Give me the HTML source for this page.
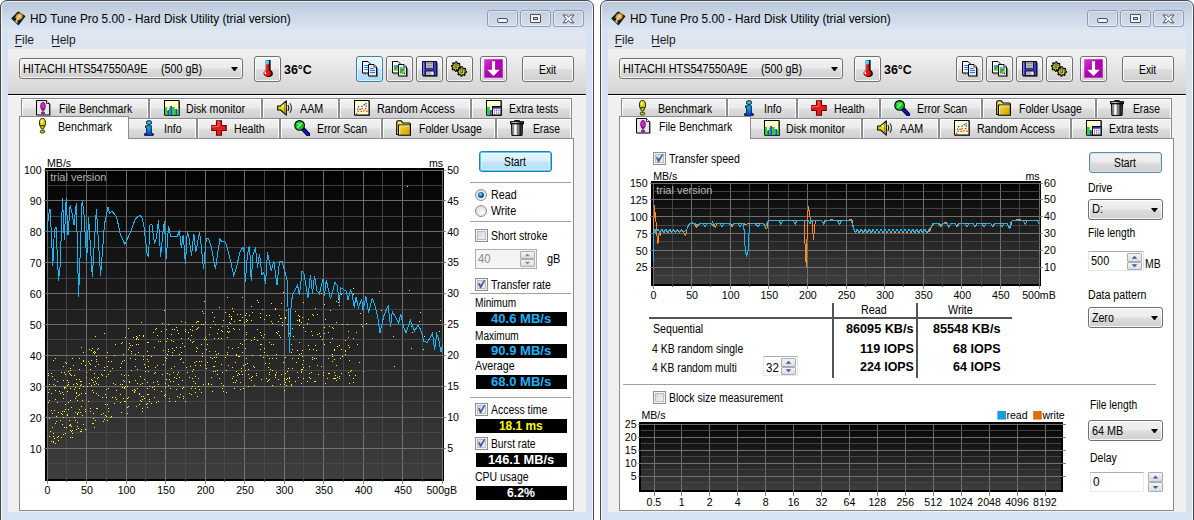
<!DOCTYPE html>
<html lang="en"><head><meta charset="utf-8"><title>HD Tune Pro 5.00 - Hard Disk Utility (trial version)</title>
<style>
html,body{margin:0;padding:0}
body{width:1194px;height:520px;overflow:hidden;background:#fff;position:relative;font-family:"Liberation Sans", Arial, sans-serif;font-size:12px;line-height:16px;color:#000}
div,span,svg{position:absolute;box-sizing:border-box}
.t{white-space:pre;transform-origin:0 0}
.win{top:0;width:594px;height:540px;border:1px solid #484848;border-radius:7px 7px 0 0;background:linear-gradient(#b7c7d9 0,#c9d7e6 14px,#dbe6f3 30px,#d6e3f2 31px);box-shadow:inset 0 0 0 1px rgba(255,255,255,.75)}
.btn{border:1px solid #707070;border-radius:3px;background:linear-gradient(#f2f2f2 0,#ebebeb 48%,#dddddd 52%,#cfcfcf 100%);box-shadow:inset 0 0 0 1px rgba(255,255,255,.85)}
.btn.hot{border-color:#3c7fb1;background:linear-gradient(#eaf6fd 0,#d9f0fc 48%,#bee6fd 52%,#a7d9f5 100%);box-shadow:inset 0 0 0 1px rgba(255,255,255,.6)}
.btn.def{border-color:#6d8799;background:linear-gradient(#f2f2f2 0,#ebebeb 48%,#dddddd 52%,#cfcfcf 100%);box-shadow:inset 0 0 0 1px #bfe8f6}
.btn.hotdef{border-color:#3479ad;background:linear-gradient(#e8f5fd 0,#d9effb 48%,#c2e5f8 52%,#b4def6 100%);box-shadow:inset 0 0 0 1px #46d2f8,inset 0 0 0 2px rgba(255,255,255,.45)}
.tab{height:20px;border:1px solid #898c95;border-bottom:none;background:linear-gradient(#f2f2f2 0,#ebebeb 48%,#dddddd 52%,#d0d0d0 100%);box-shadow:inset 1px 1px 0 rgba(255,255,255,.85),inset -1px 0 0 rgba(255,255,255,.85)}
.tab.sel{height:23px;background:#fff;z-index:3;box-shadow:none}
.page{background:#fff;border:1px solid #898c95}
.sep{height:1px;background:#a0a0a0}
.cb{width:13px;height:13px;border:1px solid #8e8f8f;background:linear-gradient(135deg,#ccd0d6,#f8f8f9);box-shadow:inset 0 0 0 1px #f4f4f4,inset 0 0 0 2px #b9bdc4}
.cb.on{}
.rb{width:12px;height:12px;border:1px solid #8e8f8f;border-radius:50%;background:radial-gradient(circle at 60% 60%,#fdfdfd,#cfd3d9)}
.vb{background:#000;width:92px;height:14px}
.arrow{width:0;height:0;border-left:3.5px solid transparent;border-right:3.5px solid transparent;border-top:4px solid #000}
.edit{background:#fff;border:1px solid #e3e9ef;border-top-color:#abadb3}
.spbtn{border:1px solid #a9adb5;background:linear-gradient(#f4f4f4,#dcdcdc);border-radius:1px}
</style></head>
<body>
<div class="win" style="left:0px"><div style="left:-1px;top:-1px;width:594px;height:540px"><svg style="left:10.5px;top:10.8px" width="15" height="15" viewBox="0 0 15.4 15.4" ><path d="M.6 7.6 L7.2 .8 L14.4 5.4 L7.6 14.4Z" fill="#1a1a1a" stroke="#000" stroke-width=".8"/><path d="M1 8.2 L7.6 14.8 L7.6 13" fill="#555"/><ellipse cx="8.4" cy="5.8" rx="3.9" ry="3.3" transform="rotate(-35 8.4 5.8)" fill="#f0a838" stroke="#7a4a08" stroke-width=".7"/><ellipse cx="8.4" cy="5.4" rx="1.2" ry="1" fill="#fde8b0"/><path d="M7 6.6 L5.6 11" stroke="#d8d8d8" stroke-width="1.5"/><path d="M4.4 10 L6.6 12" stroke="#bbb" stroke-width="1.4"/></svg><span class="t" style="left:29.80px;top:10.60px;transform:scaleX(0.9847);">HD Tune Pro 5.00 - Hard Disk Utility (trial version)</span><div style="left:487px;top:10px;width:31px;height:17px;border:1px solid #8d9db7;border-radius:3px;background:linear-gradient(#c3d0e0,#d3deeb);box-shadow:inset 0 0 0 1px rgba(255,255,255,.45)"></div><div style="left:520px;top:10px;width:31px;height:17px;border:1px solid #8d9db7;border-radius:3px;background:linear-gradient(#c3d0e0,#d3deeb);box-shadow:inset 0 0 0 1px rgba(255,255,255,.45)"></div><div style="left:553px;top:10px;width:31px;height:17px;border:1px solid #8d9db7;border-radius:3px;background:linear-gradient(#c3d0e0,#d3deeb);box-shadow:inset 0 0 0 1px rgba(255,255,255,.45)"></div><div style="left:497px;top:18px;width:11px;height:5px;border:1px solid #4a4f5c;border-radius:2px;background:#f4f4f4"></div><div style="left:530px;top:14px;width:11px;height:9px;border:1px solid #4a4f5c;border-radius:1px;background:#f4f4f4"></div><div style="left:533px;top:17px;width:5px;height:3px;border:1px solid #4a4f5c;background:#c9d5e4"></div><svg style="left:562px;top:14px" width="13" height="10" viewBox="0 0 13 10" ><path d="M1 1 L4.4 1 L6.5 3.1 L8.6 1 L12 1 L8.7 4.9 L12 8.8 L8.6 8.8 L6.5 6.6 L4.4 8.8 L1 8.8 L4.3 4.9Z" fill="#f6f6f6" stroke="#4a4f5c" stroke-width="1" stroke-linejoin="round"/></svg><div style="left:8px;top:30px;width:578px;height:482px;background:#f0f0f0"></div><div style="left:8px;top:30px;width:578px;height:19px;background:linear-gradient(#e1e7f0,#dde4ee)"></div><span class="t" style="left:14.70px;top:31.70px;color:#1c1c2c;">File</span><div style="left:15px;top:46px;width:7px;height:1px;background:#1c1c2c"></div><span class="t" style="left:51.00px;top:31.70px;color:#1c1c2c;">Help</span><div style="left:51.5px;top:46px;width:8.5px;height:1px;background:#1c1c2c"></div><div style="left:8px;top:49px;width:578px;height:45px;background:linear-gradient(#f1f1f1,#e6e6e6 45%,#d4d4d4)"></div><div style="left:8px;top:94px;width:578px;height:1px;background:#000"></div><div style="left:8px;top:95px;width:578px;height:1px;background:#fff"></div><div class="btn" style="left:19px;top:58px;width:224px;height:21px;"></div><span class="t" style="left:22.60px;top:61.00px;transform:scaleX(0.9069);">HITACHI HTS547550A9E</span><span class="t" style="left:161.40px;top:61.00px;transform:scaleX(0.8950);">(500 gB)</span><div class="arrow" style="left:231px;top:67px;width:7px;height:4px;"></div><div class="btn" style="left:254px;top:56px;width:27px;height:26px;"></div><svg style="left:263px;top:59.6px" width="10.5" height="17.5" viewBox="0 0 10.5 17.5" shape-rendering="geometricPrecision"><path d="M4 0 H7.6 V10.1 Q9.9 11.3 9.9 13.6 Q9.9 17 5.8 17 Q2.4 17 1.8 14.6 L4 10.4Z" fill="#000"/><path d="M2.6 .4 H6.1 V10 Q8.3 11.2 8.3 13.3 Q8.3 16.3 4.4 16.3 Q.6 16.3 .6 13.3 Q.6 11.2 2.6 10Z" fill="#f01010" stroke="#000" stroke-width=".35"/><rect x="2.6" y=".4" width="3.5" height="3.8" fill="#38d8e8"/><path d="M2.3 11.8 Q1.7 13.4 3 14.2" stroke="#fff" stroke-width="1.3" fill="none"/><path d="M.8 13.3 Q.8 11.4 2.8 10.2 V.6" fill="none" stroke="#a0e8f4" stroke-width=".7"/></svg><span class="t" style="left:284.00px;top:61.90px;font-weight:bold;transform:scaleX(1.0368);">36°C</span><div class="btn hot" style="left:356px;top:56px;width:27px;height:26px;"></div><svg style="left:362px;top:61px" width="16" height="16" viewBox="0 0 16 16" shape-rendering="geometricPrecision"><path d="M.5 .5 H6 L8.5 3 V12 H.5Z" fill="#f4f4f4" stroke="#000"/><path d="M1 12.8 H9.3 V4" fill="none" stroke="#555"/><path d="M2.3 4.5 H6 M2.3 6.5 H6 M2.3 8.5 H6" stroke="#1878ff" stroke-width="1"/><path d="M6.5 3.5 H12 L14.5 6 V15 H6.5Z" fill="#e8e8e8" stroke="#000"/><path d="M7 15.8 H15.3 V7" fill="none" stroke="#555"/><path d="M12 3.5 V6 H14.5" fill="#fff" stroke="#000" stroke-width=".8"/><path d="M8 7.5 H12 M8 9.5 H13 M8 11.5 H13" stroke="#1878ff" stroke-width="1.1"/></svg><div class="btn" style="left:386px;top:56px;width:27px;height:26px;"></div><svg style="left:392px;top:61px" width="16" height="16" viewBox="0 0 16 16" shape-rendering="geometricPrecision"><path d="M.5 .5 H6 L8.5 3 V12 H.5Z" fill="#f4f4f4" stroke="#000"/><path d="M1 12.8 H9.3 V4" fill="none" stroke="#555"/><rect x="2" y="4" width="4.5" height="5.5" fill="#20c020"/><rect x="2" y="4" width="4.5" height="1.6" fill="#30b0f0"/><rect x="3.5" y="6" width="1.8" height="1.8" fill="#f03020"/><rect x="4.4" y="7" width="1.2" height="1.4" fill="#f0e020"/><path d="M6.5 3.5 H12 L14.5 6 V15 H6.5Z" fill="#e8e8e8" stroke="#000"/><path d="M7 15.8 H15.3 V7" fill="none" stroke="#555"/><path d="M12 3.5 V6 H14.5" fill="#fff" stroke="#000" stroke-width=".8"/><rect x="8" y="6.5" width="4.6" height="6" fill="#20c020"/><rect x="8" y="6.5" width="4.6" height="1.6" fill="#30b0f0"/><rect x="9.6" y="8.6" width="1.8" height="1.8" fill="#f03020"/><rect x="10.4" y="9.8" width="1.3" height="1.5" fill="#f0e020"/><rect x="12" y="12" width="1" height="1" fill="#000"/></svg><div class="btn" style="left:416px;top:56px;width:27px;height:26px;"></div><svg style="left:422px;top:61px" width="16" height="16" viewBox="0 0 16 16" shape-rendering="geometricPrecision"><path d="M1 14.8 L.5 14 V.5 H14.5 V14.8Z" fill="#3a3af0" stroke="#000"/><path d="M1.3 15.5 H15.3 V1.5" fill="none" stroke="#555" stroke-width="1"/><rect x="3.5" y=".8" width="8" height="7" fill="#c8c8c8" stroke="#000" stroke-width=".8"/><path d="M4.5 2.6 H10.5 M4.5 4.4 H10.5 M4.5 6.2 H10.5" stroke="#888" stroke-width=".9"/><rect x="3.5" y="10" width="8.5" height="4.6" fill="#b8b8b8" stroke="#000" stroke-width=".8"/><rect x="9.5" y="10.8" width="1.8" height="3" fill="#fff"/><path d="M1.4 1 V14" stroke="#8080ff" stroke-width="1"/></svg><div class="btn" style="left:446px;top:56px;width:27px;height:26px;"></div><svg style="left:451px;top:60.5px" width="16" height="16" viewBox="0 0 16 16" shape-rendering="geometricPrecision"><polygon points="9.70,5.60 9.61,6.52 8.05,6.86 7.74,7.43 8.32,8.92 7.61,9.51 6.26,8.65 5.64,8.84 5.00,10.30 4.08,10.21 3.74,8.65 3.17,8.34 1.68,8.92 1.09,8.21 1.95,6.86 1.76,6.24 0.30,5.60 0.39,4.68 1.95,4.34 2.26,3.77 1.68,2.28 2.39,1.69 3.74,2.55 4.36,2.36 5.00,0.90 5.92,0.99 6.26,2.55 6.83,2.86 8.32,2.28 8.91,2.99 8.05,4.34 8.24,4.96" fill="#e4e400" stroke="#000" stroke-width="1.1" stroke-linejoin="round"/><polygon points="15.50,10.60 15.41,11.52 13.85,11.86 13.54,12.43 14.12,13.92 13.41,14.51 12.06,13.65 11.44,13.84 10.80,15.30 9.88,15.21 9.54,13.65 8.97,13.34 7.48,13.92 6.89,13.21 7.75,11.86 7.56,11.24 6.10,10.60 6.19,9.68 7.75,9.34 8.06,8.77 7.48,7.28 8.19,6.69 9.54,7.55 10.16,7.36 10.80,5.90 11.72,5.99 12.06,7.55 12.63,7.86 14.12,7.28 14.71,7.99 13.85,9.34 14.04,9.96" fill="#e4e400" stroke="#000" stroke-width="1.1" stroke-linejoin="round"/><path d="M4.1 7 V2.2 L5 .4 L5.9 2.2 V7Z" fill="#c0c0c0" stroke="#222" stroke-width=".7"/><path d="M9.9 12 V7.2 L10.8 5.4 L11.7 7.2 V12Z" fill="#c0c0c0" stroke="#222" stroke-width=".7"/></svg><div class="btn" style="left:480px;top:56px;width:27px;height:26px;"></div><div style="left:484px;top:59px;width:19px;height:19px;background:linear-gradient(135deg,#d040d0,#b000b0 45%,#a000a0);border-radius:1px;box-shadow:inset 0 0 0 1px rgba(255,160,255,.35)"></div><svg style="left:484px;top:59px" width="19" height="19" viewBox="0 0 19 19" ><path d="M7.9 2.3 H11.1 V10.7 H15.8 L9.5 17 L3.2 10.7 H7.9Z" fill="#fff"/></svg><div class="btn" style="left:522px;top:56px;width:52px;height:26px;"></div><span class="t" style="left:538.90px;top:61.50px;transform:scaleX(0.8593);">Exit</span><div class="page" style="left:19px;top:138px;width:555px;height:373px;"></div><div class="tab" style="left:21px;top:98px;width:128px;height:20px;"></div><svg style="left:36px;top:100px" width="16" height="16" viewBox="0 0 16 16" shape-rendering="geometricPrecision"><path d="M.5 .5 H10.5 L13.5 3.5 V15 H.5Z" fill="#e6e6e6" stroke="#000"/><path d="M1 15.7 H14.2 V4" fill="none" stroke="#777" stroke-width="1"/><path d="M10.5 .5 V3.5 H13.5" fill="#fff" stroke="#000" stroke-width=".8"/><ellipse cx="7" cy="6.2" rx="2.3" ry="3.8" fill="#e020e0" stroke="#400040" stroke-width=".8"/><path d="M5.8 9 L8.2 9 L7.6 11 L6.4 11Z" fill="#e020e0" stroke="#400040" stroke-width=".6"/><rect x="5.4" y="12" width="3.2" height="2" rx=".9" fill="#e020e0" stroke="#400040" stroke-width=".7"/></svg><span class="t" style="left:58.70px;top:100.50px;transform:scaleX(0.8780);">File Benchmark</span><div class="tab" style="left:149px;top:98px;width:113px;height:20px;"></div><svg style="left:164px;top:100px" width="16" height="16" viewBox="0 0 16 16" shape-rendering="geometricPrecision"><rect x="1" y="1" width="15" height="15" fill="#555"/><rect x=".5" y=".5" width="14.5" height="14.5" fill="#ffffc8" stroke="#000"/><path d="M1 15 V7 H3 V15Z M5 15 V7.5 H6.2 V15Z M8 15 V7 H10.6 V15Z M13 15 V10 H14.5 V15Z M3 15 V11 H5 V15Z M10.6 15 V9 H11.4 V15Z" fill="#18e018"/><path d="M3.6 15 V10 H5 V15Z M6.2 15 V6 H8 V15Z M11.4 15 V9 H13 V15Z" fill="#3838f0"/></svg><span class="t" style="left:186.40px;top:100.50px;transform:scaleX(0.8847);">Disk monitor</span><div class="tab" style="left:262px;top:98px;width:77px;height:20px;"></div><svg style="left:277px;top:100px" width="16" height="16" viewBox="0 0 16 16" shape-rendering="geometricPrecision"><path d="M.7 6 H3.6 L9.3 .8 V15.2 L3.6 10 H.7Z" fill="#e8e000" stroke="#000" stroke-width="1.1" stroke-linejoin="round"/><path d="M3.8 6.2 L8.4 2.4 V8" fill="#ffff90"/><path d="M7.4 3 V13" stroke="#806000" stroke-width=".8"/><path d="M11 5 Q12.6 8 11 11" fill="none" stroke="#111" stroke-width="1.1"/><path d="M13 3.2 Q15.8 8 13 12.8" fill="none" stroke="#333" stroke-width="1.1"/></svg><span class="t" style="left:299.80px;top:100.50px;transform:scaleX(0.8918);">AAM</span><div class="tab" style="left:339px;top:98px;width:132px;height:20px;"></div><svg style="left:354px;top:100px" width="16" height="16" viewBox="0 0 16 16" shape-rendering="geometricPrecision"><rect x="1" y="1" width="15" height="15" fill="#555"/><rect x=".5" y=".5" width="14.5" height="14.5" fill="#ffffc8" stroke="#000"/><g fill="#f01818"><rect x="2" y="13" width="1.3" height="1.3"/><rect x="3.5" y="10.6" width="1.3" height="1.3"/><rect x="6.6" y="10.8" width="1.3" height="1.3"/><rect x="7.4" y="8" width="1.3" height="1.3"/><rect x="9.2" y="10.2" width="1.3" height="1.3"/><rect x="11" y="8" width="1.3" height="1.3"/><rect x="12.3" y="10.6" width="1.3" height="1.3"/></g><g fill="#2030f0"><rect x="3" y="8.4" width="1.3" height="1.3"/><rect x="4" y="6" width="1.3" height="1.3"/><rect x="5.4" y="8.8" width="1.3" height="1.3"/><rect x="7.4" y="5.6" width="1.3" height="1.3"/><rect x="9.6" y="4" width="1.3" height="1.3"/><rect x="11.4" y="3" width="1.3" height="1.3"/><rect x="11.6" y="5.4" width="1.3" height="1.3"/></g></svg><span class="t" style="left:377.00px;top:100.50px;transform:scaleX(0.8983);">Random Access</span><div class="tab" style="left:471px;top:98px;width:101px;height:20px;"></div><svg style="left:486px;top:100px" width="16" height="16" viewBox="0 0 16 16" shape-rendering="geometricPrecision"><rect x="1" y="1" width="15" height="15" fill="#555"/><rect x=".5" y=".5" width="14.5" height="14.5" fill="#ffffc8" stroke="#000"/><rect x="1" y="7" width="2.8" height="8" fill="#18e018"/><rect x="3.8" y="10" width="2" height="5" fill="#3838f0"/><rect x="6.5" y="6.5" width="8.5" height="8.5" fill="#fff" stroke="#000" stroke-width="1"/><rect x="7" y="7" width="7.5" height="1.7" fill="#2030e0"/><rect x="7.9" y="9.7" width="1.1" height="1.1" fill="#f01818"/><rect x="10.1" y="9.7" width="1.1" height="1.1" fill="#2030f0"/><rect x="12.3" y="9.7" width="1.1" height="1.1" fill="#f01818"/><rect x="7.9" y="11.6" width="1.1" height="1.1" fill="#10a010"/><rect x="10.1" y="11.6" width="1.1" height="1.1" fill="#f01818"/><rect x="12.3" y="11.6" width="1.1" height="1.1" fill="#10a010"/><rect x="7.9" y="13.4" width="1.1" height="1.1" fill="#f01818"/><rect x="10.1" y="13.4" width="1.1" height="1.1" fill="#10a010"/><rect x="12.3" y="13.4" width="1.1" height="1.1" fill="#2030f0"/></svg><span class="t" style="left:508.90px;top:100.50px;transform:scaleX(0.8679);">Extra tests</span><div class="tab sel" style="left:19px;top:116px;width:110px;height:23px;"></div><div style="z-index:4;left:0;top:0;width:0;height:0"><svg style="left:39px;top:118px" width="16" height="16" viewBox="0 0 16 16" shape-rendering="geometricPrecision"><ellipse cx="3.5" cy="5" rx="3" ry="4.7" fill="#d8d800" stroke="#222" stroke-width="1"/><path d="M1.6 7.5 L5.4 7.5 L4.6 11 L2.4 11Z" fill="#d8d800" stroke="#222" stroke-width=".9"/><ellipse cx="2.8" cy="3.5" rx="1" ry="1.8" fill="#ffff90"/><rect x="1.3" y="12.3" width="4.4" height="2.7" rx="1.2" fill="#c8c800" stroke="#222" stroke-width=".9"/></svg><span class="t" style="left:57.80px;top:118.50px;transform:scaleX(0.8896);">Benchmark</span></div><div class="tab" style="left:127px;top:118px;width:70px;height:20px;"></div><svg style="left:144px;top:120px" width="16" height="16" viewBox="0 0 16 16" shape-rendering="geometricPrecision"><defs><linearGradient id="ig" x1="0" y1="0" x2="0" y2="1"><stop offset="0" stop-color="#00c8f8"/><stop offset="1" stop-color="#0030f0"/></linearGradient></defs><rect x="2.5" y=".8" width="5" height="3.6" rx="1.4" fill="#18c0f8" stroke="#111" stroke-width=".9"/><path d="M1.5 5.8 H7.4 V13.6 H9.3 V15.4 H.6 V13.6 H2.6 V7.6 H1.5Z" fill="url(#ig)" stroke="#111" stroke-width=".9"/></svg><span class="t" style="left:163.90px;top:120.50px;transform:scaleX(0.8743);">Info</span><div class="tab" style="left:197px;top:118px;width:83px;height:20px;"></div><svg style="left:211px;top:120px" width="16" height="16" viewBox="0 0 16 16" shape-rendering="geometricPrecision"><path d="M5.5 .8 H10.5 V5.5 H15.2 V10.5 H10.5 V15.2 H5.5 V10.5 H.8 V5.5 H5.5Z" fill="#e21c1c" stroke="#6a0000" stroke-width="1.1"/><path d="M6.3 1.8 H8 V6.3 H1.8 V8" fill="none" stroke="#ff7070" stroke-width="1"/></svg><span class="t" style="left:233.80px;top:120.50px;transform:scaleX(0.8850);">Health</span><div class="tab" style="left:280px;top:118px;width:102px;height:20px;"></div><svg style="left:294px;top:120px" width="16" height="16" viewBox="0 0 16 16" shape-rendering="geometricPrecision"><path d="M9.3 9.3 L14.3 14.6" stroke="#000" stroke-width="4.2" stroke-linecap="round"/><path d="M9.3 9.3 L14.3 14.6" stroke="#1010d0" stroke-width="2.4" stroke-linecap="round"/><circle cx="5.6" cy="5.4" r="4.8" fill="#18c828" stroke="#000" stroke-width="1.1"/><path d="M3.5 7.6 L7.6 3.3" stroke="#b0ffb0" stroke-width="1.3"/><circle cx="4.2" cy="3.8" r="1.1" fill="#70f070"/></svg><span class="t" style="left:316.80px;top:120.50px;transform:scaleX(0.8752);">Error Scan</span><div class="tab" style="left:382px;top:118px;width:114px;height:20px;"></div><svg style="left:396px;top:120px" width="16" height="16" viewBox="0 0 16 16" shape-rendering="geometricPrecision"><defs><linearGradient id="fg" x1="0" y1="0" x2="1" y2="1"><stop offset="0" stop-color="#f6e040"/><stop offset="1" stop-color="#cf9800"/></linearGradient></defs><path d="M.7 14.5 V2.2 Q.7 .8 2.2 .8 H5.2 L7 3 H13.2 Q14.4 3 14.4 4.2 V14.5Z" fill="#f2e060" stroke="#000" stroke-width="1.1"/><path d="M2.6 15.3 V5 H14.4 V15.3Z" fill="url(#fg)" stroke="#000" stroke-width="1.1"/><path d="M3.6 14.5 V6 H13.4" fill="none" stroke="#fff6a0" stroke-width=".9"/></svg><span class="t" style="left:418.90px;top:120.50px;transform:scaleX(0.8717);">Folder Usage</span><div class="tab" style="left:496px;top:118px;width:76px;height:20px;"></div><svg style="left:510.3px;top:120px" width="16" height="16" viewBox="0 0 16 16" shape-rendering="geometricPrecision"><defs><linearGradient id="eg" x1="0" y1="0" x2="1" y2="0"><stop offset="0" stop-color="#666"/><stop offset=".18" stop-color="#d8d8d8"/><stop offset=".38" stop-color="#fff"/><stop offset=".58" stop-color="#a8a8a8"/><stop offset=".8" stop-color="#1a1a1a"/><stop offset="1" stop-color="#666"/></linearGradient></defs><path d="M4.6 1.8 V.6 H9.4 V1.8" fill="#888" stroke="#000" stroke-width="1"/><rect x=".5" y="1.7" width="13" height="2" fill="url(#eg)" stroke="#000" stroke-width="1"/><path d="M1.5 3.9 H12.5 L12.1 15.4 H1.9Z" fill="url(#eg)" stroke="#000" stroke-width="1"/><path d="M3.6 5 V14.6 M7.4 5 V14.6" stroke="#444" stroke-width=".6"/></svg><span class="t" style="left:532.80px;top:120.50px;transform:scaleX(0.8578);">Erase</span><div style="left:45px;top:168px;width:399px;height:313px;background:#000"></div><div style="left:47px;top:170px;width:396px;height:309px;background:linear-gradient(#000 0,#070707 6%,#3e3e3e 100%)"></div><svg style="left:0;top:0" width="594" height="520" font-family='"Liberation Sans", Arial, sans-serif' font-size="10.6"><rect x="47" y="170" width="1" height="314" fill="#787878" fill-opacity=".9"/><rect x="66" y="170" width="1" height="312" fill="#4b4b4b" fill-opacity=".85"/><rect x="86" y="170" width="1" height="314" fill="#787878" fill-opacity=".9"/><rect x="106" y="170" width="1" height="312" fill="#4b4b4b" fill-opacity=".85"/><rect x="126" y="170" width="1" height="314" fill="#787878" fill-opacity=".9"/><rect x="145" y="170" width="1" height="312" fill="#4b4b4b" fill-opacity=".85"/><rect x="165" y="170" width="1" height="314" fill="#787878" fill-opacity=".9"/><rect x="185" y="170" width="1" height="312" fill="#4b4b4b" fill-opacity=".85"/><rect x="205" y="170" width="1" height="314" fill="#787878" fill-opacity=".9"/><rect x="224" y="170" width="1" height="312" fill="#4b4b4b" fill-opacity=".85"/><rect x="244" y="170" width="1" height="314" fill="#787878" fill-opacity=".9"/><rect x="264" y="170" width="1" height="312" fill="#4b4b4b" fill-opacity=".85"/><rect x="284" y="170" width="1" height="314" fill="#787878" fill-opacity=".9"/><rect x="303" y="170" width="1" height="312" fill="#4b4b4b" fill-opacity=".85"/><rect x="323" y="170" width="1" height="314" fill="#787878" fill-opacity=".9"/><rect x="343" y="170" width="1" height="312" fill="#4b4b4b" fill-opacity=".85"/><rect x="363" y="170" width="1" height="314" fill="#787878" fill-opacity=".9"/><rect x="382" y="170" width="1" height="312" fill="#4b4b4b" fill-opacity=".85"/><rect x="402" y="170" width="1" height="314" fill="#787878" fill-opacity=".9"/><rect x="422" y="170" width="1" height="312" fill="#4b4b4b" fill-opacity=".85"/><rect x="442" y="170" width="1" height="314" fill="#787878" fill-opacity=".9"/><rect x="44" y="170" width="402" height="1" fill="#787878" fill-opacity=".9"/><rect x="47" y="185" width="396" height="1" fill="#4b4b4b" fill-opacity=".85"/><rect x="44" y="200" width="402" height="1" fill="#787878" fill-opacity=".9"/><rect x="47" y="216" width="396" height="1" fill="#4b4b4b" fill-opacity=".85"/><rect x="44" y="231" width="402" height="1" fill="#787878" fill-opacity=".9"/><rect x="47" y="247" width="396" height="1" fill="#4b4b4b" fill-opacity=".85"/><rect x="44" y="262" width="402" height="1" fill="#787878" fill-opacity=".9"/><rect x="47" y="278" width="396" height="1" fill="#4b4b4b" fill-opacity=".85"/><rect x="44" y="293" width="402" height="1" fill="#787878" fill-opacity=".9"/><rect x="47" y="309" width="396" height="1" fill="#4b4b4b" fill-opacity=".85"/><rect x="44" y="324" width="402" height="1" fill="#787878" fill-opacity=".9"/><rect x="47" y="339" width="396" height="1" fill="#4b4b4b" fill-opacity=".85"/><rect x="44" y="355" width="402" height="1" fill="#787878" fill-opacity=".9"/><rect x="47" y="370" width="396" height="1" fill="#4b4b4b" fill-opacity=".85"/><rect x="44" y="386" width="402" height="1" fill="#787878" fill-opacity=".9"/><rect x="47" y="401" width="396" height="1" fill="#4b4b4b" fill-opacity=".85"/><rect x="44" y="417" width="402" height="1" fill="#787878" fill-opacity=".9"/><rect x="47" y="432" width="396" height="1" fill="#4b4b4b" fill-opacity=".85"/><rect x="44" y="448" width="402" height="1" fill="#787878" fill-opacity=".9"/><rect x="47" y="463" width="396" height="1" fill="#4b4b4b" fill-opacity=".85"/><rect x="192" y="371" width="1" height="1" fill="#ff0"/><rect x="235" y="382" width="1" height="1" fill="#ff0"/><rect x="248" y="369" width="1" height="1" fill="#ff0"/><rect x="305" y="331" width="1" height="1" fill="#ff0"/><rect x="108" y="408" width="1" height="1" fill="#ff0"/><rect x="195" y="365" width="1" height="1" fill="#ff0"/><rect x="207" y="344" width="1" height="1" fill="#ff0"/><rect x="136" y="339" width="1" height="1" fill="#ff0"/><rect x="148" y="394" width="1" height="1" fill="#ff0"/><rect x="70" y="374" width="1" height="1" fill="#ff0"/><rect x="353" y="294" width="1" height="1" fill="#ff0"/><rect x="75" y="412" width="1" height="1" fill="#ff0"/><rect x="289" y="378" width="1" height="1" fill="#ff0"/><rect x="301" y="372" width="1" height="1" fill="#ff0"/><rect x="108" y="374" width="1" height="1" fill="#ff0"/><rect x="182" y="388" width="1" height="1" fill="#ff0"/><rect x="320" y="336" width="1" height="1" fill="#ff0"/><rect x="115" y="397" width="1" height="1" fill="#ff0"/><rect x="71" y="426" width="1" height="1" fill="#ff0"/><rect x="125" y="386" width="1" height="1" fill="#ff0"/><rect x="202" y="356" width="1" height="1" fill="#ff0"/><rect x="106" y="357" width="1" height="1" fill="#ff0"/><rect x="108" y="361" width="1" height="1" fill="#ff0"/><rect x="110" y="371" width="1" height="1" fill="#ff0"/><rect x="81" y="431" width="1" height="1" fill="#ff0"/><rect x="123" y="354" width="1" height="1" fill="#ff0"/><rect x="141" y="401" width="1" height="1" fill="#ff0"/><rect x="69" y="373" width="1" height="1" fill="#ff0"/><rect x="137" y="337" width="1" height="1" fill="#ff0"/><rect x="53" y="442" width="1" height="1" fill="#ff0"/><rect x="165" y="360" width="1" height="1" fill="#ff0"/><rect x="163" y="350" width="1" height="1" fill="#ff0"/><rect x="234" y="388" width="1" height="1" fill="#ff0"/><rect x="53" y="360" width="1" height="1" fill="#ff0"/><rect x="201" y="344" width="1" height="1" fill="#ff0"/><rect x="272" y="323" width="1" height="1" fill="#ff0"/><rect x="160" y="341" width="1" height="1" fill="#ff0"/><rect x="299" y="321" width="1" height="1" fill="#ff0"/><rect x="169" y="401" width="1" height="1" fill="#ff0"/><rect x="282" y="322" width="1" height="1" fill="#ff0"/><rect x="286" y="385" width="1" height="1" fill="#ff0"/><rect x="201" y="361" width="1" height="1" fill="#ff0"/><rect x="341" y="294" width="1" height="1" fill="#ff0"/><rect x="112" y="368" width="1" height="1" fill="#ff0"/><rect x="332" y="354" width="1" height="1" fill="#ff0"/><rect x="185" y="329" width="1" height="1" fill="#ff0"/><rect x="233" y="376" width="1" height="1" fill="#ff0"/><rect x="206" y="339" width="1" height="1" fill="#ff0"/><rect x="136" y="406" width="1" height="1" fill="#ff0"/><rect x="135" y="366" width="1" height="1" fill="#ff0"/><rect x="148" y="342" width="1" height="1" fill="#ff0"/><rect x="192" y="330" width="1" height="1" fill="#ff0"/><rect x="273" y="344" width="1" height="1" fill="#ff0"/><rect x="300" y="289" width="1" height="1" fill="#ff0"/><rect x="92" y="423" width="1" height="1" fill="#ff0"/><rect x="190" y="340" width="1" height="1" fill="#ff0"/><rect x="266" y="378" width="1" height="1" fill="#ff0"/><rect x="104" y="367" width="1" height="1" fill="#ff0"/><rect x="134" y="389" width="1" height="1" fill="#ff0"/><rect x="213" y="371" width="1" height="1" fill="#ff0"/><rect x="336" y="380" width="1" height="1" fill="#ff0"/><rect x="89" y="363" width="1" height="1" fill="#ff0"/><rect x="229" y="322" width="1" height="1" fill="#ff0"/><rect x="348" y="372" width="1" height="1" fill="#ff0"/><rect x="276" y="372" width="1" height="1" fill="#ff0"/><rect x="360" y="313" width="1" height="1" fill="#ff0"/><rect x="158" y="401" width="1" height="1" fill="#ff0"/><rect x="223" y="391" width="1" height="1" fill="#ff0"/><rect x="68" y="382" width="1" height="1" fill="#ff0"/><rect x="154" y="397" width="1" height="1" fill="#ff0"/><rect x="278" y="321" width="1" height="1" fill="#ff0"/><rect x="349" y="383" width="1" height="1" fill="#ff0"/><rect x="280" y="337" width="1" height="1" fill="#ff0"/><rect x="316" y="358" width="1" height="1" fill="#ff0"/><rect x="114" y="355" width="1" height="1" fill="#ff0"/><rect x="214" y="357" width="1" height="1" fill="#ff0"/><rect x="240" y="389" width="1" height="1" fill="#ff0"/><rect x="212" y="358" width="1" height="1" fill="#ff0"/><rect x="268" y="380" width="1" height="1" fill="#ff0"/><rect x="179" y="377" width="1" height="1" fill="#ff0"/><rect x="88" y="401" width="1" height="1" fill="#ff0"/><rect x="334" y="372" width="1" height="1" fill="#ff0"/><rect x="89" y="349" width="1" height="1" fill="#ff0"/><rect x="120" y="394" width="1" height="1" fill="#ff0"/><rect x="81" y="381" width="1" height="1" fill="#ff0"/><rect x="210" y="357" width="1" height="1" fill="#ff0"/><rect x="167" y="373" width="1" height="1" fill="#ff0"/><rect x="98" y="377" width="1" height="1" fill="#ff0"/><rect x="319" y="333" width="1" height="1" fill="#ff0"/><rect x="283" y="362" width="1" height="1" fill="#ff0"/><rect x="341" y="373" width="1" height="1" fill="#ff0"/><rect x="90" y="411" width="1" height="1" fill="#ff0"/><rect x="313" y="349" width="1" height="1" fill="#ff0"/><rect x="176" y="389" width="1" height="1" fill="#ff0"/><rect x="338" y="302" width="1" height="1" fill="#ff0"/><rect x="289" y="377" width="1" height="1" fill="#ff0"/><rect x="81" y="429" width="1" height="1" fill="#ff0"/><rect x="211" y="384" width="1" height="1" fill="#ff0"/><rect x="67" y="380" width="1" height="1" fill="#ff0"/><rect x="196" y="361" width="1" height="1" fill="#ff0"/><rect x="239" y="320" width="1" height="1" fill="#ff0"/><rect x="192" y="342" width="1" height="1" fill="#ff0"/><rect x="110" y="417" width="1" height="1" fill="#ff0"/><rect x="303" y="327" width="1" height="1" fill="#ff0"/><rect x="176" y="327" width="1" height="1" fill="#ff0"/><rect x="130" y="345" width="1" height="1" fill="#ff0"/><rect x="295" y="311" width="1" height="1" fill="#ff0"/><rect x="292" y="328" width="1" height="1" fill="#ff0"/><rect x="70" y="437" width="1" height="1" fill="#ff0"/><rect x="251" y="340" width="1" height="1" fill="#ff0"/><rect x="348" y="331" width="1" height="1" fill="#ff0"/><rect x="64" y="427" width="1" height="1" fill="#ff0"/><rect x="79" y="394" width="1" height="1" fill="#ff0"/><rect x="356" y="332" width="1" height="1" fill="#ff0"/><rect x="72" y="437" width="1" height="1" fill="#ff0"/><rect x="98" y="395" width="1" height="1" fill="#ff0"/><rect x="205" y="322" width="1" height="1" fill="#ff0"/><rect x="215" y="351" width="1" height="1" fill="#ff0"/><rect x="139" y="394" width="1" height="1" fill="#ff0"/><rect x="142" y="411" width="1" height="1" fill="#ff0"/><rect x="61" y="413" width="1" height="1" fill="#ff0"/><rect x="286" y="379" width="1" height="1" fill="#ff0"/><rect x="348" y="345" width="1" height="1" fill="#ff0"/><rect x="214" y="317" width="1" height="1" fill="#ff0"/><rect x="197" y="348" width="1" height="1" fill="#ff0"/><rect x="246" y="358" width="1" height="1" fill="#ff0"/><rect x="64" y="411" width="1" height="1" fill="#ff0"/><rect x="193" y="381" width="1" height="1" fill="#ff0"/><rect x="181" y="321" width="1" height="1" fill="#ff0"/><rect x="281" y="374" width="1" height="1" fill="#ff0"/><rect x="332" y="356" width="1" height="1" fill="#ff0"/><rect x="227" y="352" width="1" height="1" fill="#ff0"/><rect x="287" y="305" width="1" height="1" fill="#ff0"/><rect x="327" y="378" width="1" height="1" fill="#ff0"/><rect x="183" y="362" width="1" height="1" fill="#ff0"/><rect x="75" y="387" width="1" height="1" fill="#ff0"/><rect x="249" y="378" width="1" height="1" fill="#ff0"/><rect x="285" y="317" width="1" height="1" fill="#ff0"/><rect x="86" y="372" width="1" height="1" fill="#ff0"/><rect x="183" y="387" width="1" height="1" fill="#ff0"/><rect x="165" y="387" width="1" height="1" fill="#ff0"/><rect x="285" y="318" width="1" height="1" fill="#ff0"/><rect x="165" y="394" width="1" height="1" fill="#ff0"/><rect x="227" y="354" width="1" height="1" fill="#ff0"/><rect x="143" y="396" width="1" height="1" fill="#ff0"/><rect x="74" y="417" width="1" height="1" fill="#ff0"/><rect x="269" y="363" width="1" height="1" fill="#ff0"/><rect x="164" y="395" width="1" height="1" fill="#ff0"/><rect x="229" y="314" width="1" height="1" fill="#ff0"/><rect x="303" y="367" width="1" height="1" fill="#ff0"/><rect x="345" y="354" width="1" height="1" fill="#ff0"/><rect x="174" y="377" width="1" height="1" fill="#ff0"/><rect x="227" y="326" width="1" height="1" fill="#ff0"/><rect x="104" y="370" width="1" height="1" fill="#ff0"/><rect x="137" y="369" width="1" height="1" fill="#ff0"/><rect x="222" y="388" width="1" height="1" fill="#ff0"/><rect x="334" y="378" width="1" height="1" fill="#ff0"/><rect x="285" y="373" width="1" height="1" fill="#ff0"/><rect x="214" y="338" width="1" height="1" fill="#ff0"/><rect x="155" y="367" width="1" height="1" fill="#ff0"/><rect x="277" y="333" width="1" height="1" fill="#ff0"/><rect x="178" y="333" width="1" height="1" fill="#ff0"/><rect x="313" y="315" width="1" height="1" fill="#ff0"/><rect x="214" y="366" width="1" height="1" fill="#ff0"/><rect x="94" y="377" width="1" height="1" fill="#ff0"/><rect x="167" y="373" width="1" height="1" fill="#ff0"/><rect x="254" y="385" width="1" height="1" fill="#ff0"/><rect x="234" y="321" width="1" height="1" fill="#ff0"/><rect x="82" y="415" width="1" height="1" fill="#ff0"/><rect x="237" y="375" width="1" height="1" fill="#ff0"/><rect x="137" y="388" width="1" height="1" fill="#ff0"/><rect x="308" y="345" width="1" height="1" fill="#ff0"/><rect x="339" y="305" width="1" height="1" fill="#ff0"/><rect x="63" y="366" width="1" height="1" fill="#ff0"/><rect x="170" y="388" width="1" height="1" fill="#ff0"/><rect x="257" y="300" width="1" height="1" fill="#ff0"/><rect x="166" y="358" width="1" height="1" fill="#ff0"/><rect x="97" y="408" width="1" height="1" fill="#ff0"/><rect x="324" y="304" width="1" height="1" fill="#ff0"/><rect x="95" y="336" width="1" height="1" fill="#ff0"/><rect x="200" y="365" width="1" height="1" fill="#ff0"/><rect x="234" y="329" width="1" height="1" fill="#ff0"/><rect x="339" y="378" width="1" height="1" fill="#ff0"/><rect x="221" y="330" width="1" height="1" fill="#ff0"/><rect x="146" y="404" width="1" height="1" fill="#ff0"/><rect x="196" y="347" width="1" height="1" fill="#ff0"/><rect x="173" y="372" width="1" height="1" fill="#ff0"/><rect x="312" y="357" width="1" height="1" fill="#ff0"/><rect x="227" y="297" width="1" height="1" fill="#ff0"/><rect x="302" y="364" width="1" height="1" fill="#ff0"/><rect x="142" y="383" width="1" height="1" fill="#ff0"/><rect x="260" y="332" width="1" height="1" fill="#ff0"/><rect x="348" y="337" width="1" height="1" fill="#ff0"/><rect x="77" y="384" width="1" height="1" fill="#ff0"/><rect x="105" y="394" width="1" height="1" fill="#ff0"/><rect x="236" y="380" width="1" height="1" fill="#ff0"/><rect x="177" y="396" width="1" height="1" fill="#ff0"/><rect x="184" y="346" width="1" height="1" fill="#ff0"/><rect x="170" y="381" width="1" height="1" fill="#ff0"/><rect x="52" y="376" width="1" height="1" fill="#ff0"/><rect x="258" y="302" width="1" height="1" fill="#ff0"/><rect x="157" y="381" width="1" height="1" fill="#ff0"/><rect x="299" y="320" width="1" height="1" fill="#ff0"/><rect x="292" y="358" width="1" height="1" fill="#ff0"/><rect x="275" y="308" width="1" height="1" fill="#ff0"/><rect x="275" y="309" width="1" height="1" fill="#ff0"/><rect x="111" y="416" width="1" height="1" fill="#ff0"/><rect x="231" y="319" width="1" height="1" fill="#ff0"/><rect x="195" y="392" width="1" height="1" fill="#ff0"/><rect x="91" y="385" width="1" height="1" fill="#ff0"/><rect x="132" y="345" width="1" height="1" fill="#ff0"/><rect x="308" y="319" width="1" height="1" fill="#ff0"/><rect x="124" y="375" width="1" height="1" fill="#ff0"/><rect x="107" y="420" width="1" height="1" fill="#ff0"/><rect x="261" y="344" width="1" height="1" fill="#ff0"/><rect x="53" y="436" width="1" height="1" fill="#ff0"/><rect x="93" y="418" width="1" height="1" fill="#ff0"/><rect x="131" y="370" width="1" height="1" fill="#ff0"/><rect x="252" y="376" width="1" height="1" fill="#ff0"/><rect x="239" y="356" width="1" height="1" fill="#ff0"/><rect x="246" y="334" width="1" height="1" fill="#ff0"/><rect x="186" y="367" width="1" height="1" fill="#ff0"/><rect x="185" y="331" width="1" height="1" fill="#ff0"/><rect x="65" y="387" width="1" height="1" fill="#ff0"/><rect x="287" y="371" width="1" height="1" fill="#ff0"/><rect x="70" y="400" width="1" height="1" fill="#ff0"/><rect x="64" y="388" width="1" height="1" fill="#ff0"/><rect x="124" y="401" width="1" height="1" fill="#ff0"/><rect x="338" y="299" width="1" height="1" fill="#ff0"/><rect x="182" y="343" width="1" height="1" fill="#ff0"/><rect x="335" y="378" width="1" height="1" fill="#ff0"/><rect x="219" y="378" width="1" height="1" fill="#ff0"/><rect x="151" y="403" width="1" height="1" fill="#ff0"/><rect x="334" y="359" width="1" height="1" fill="#ff0"/><rect x="359" y="362" width="1" height="1" fill="#ff0"/><rect x="314" y="358" width="1" height="1" fill="#ff0"/><rect x="328" y="332" width="1" height="1" fill="#ff0"/><rect x="63" y="434" width="1" height="1" fill="#ff0"/><rect x="147" y="351" width="1" height="1" fill="#ff0"/><rect x="269" y="315" width="1" height="1" fill="#ff0"/><rect x="73" y="384" width="1" height="1" fill="#ff0"/><rect x="105" y="404" width="1" height="1" fill="#ff0"/><rect x="299" y="316" width="1" height="1" fill="#ff0"/><rect x="143" y="335" width="1" height="1" fill="#ff0"/><rect x="136" y="336" width="1" height="1" fill="#ff0"/><rect x="216" y="357" width="1" height="1" fill="#ff0"/><rect x="239" y="329" width="1" height="1" fill="#ff0"/><rect x="138" y="352" width="1" height="1" fill="#ff0"/><rect x="136" y="344" width="1" height="1" fill="#ff0"/><rect x="58" y="412" width="1" height="1" fill="#ff0"/><rect x="170" y="388" width="1" height="1" fill="#ff0"/><rect x="253" y="366" width="1" height="1" fill="#ff0"/><rect x="297" y="320" width="1" height="1" fill="#ff0"/><rect x="351" y="370" width="1" height="1" fill="#ff0"/><rect x="122" y="361" width="1" height="1" fill="#ff0"/><rect x="123" y="380" width="1" height="1" fill="#ff0"/><rect x="232" y="348" width="1" height="1" fill="#ff0"/><rect x="230" y="323" width="1" height="1" fill="#ff0"/><rect x="96" y="393" width="1" height="1" fill="#ff0"/><rect x="131" y="353" width="1" height="1" fill="#ff0"/><rect x="336" y="322" width="1" height="1" fill="#ff0"/><rect x="147" y="407" width="1" height="1" fill="#ff0"/><rect x="245" y="348" width="1" height="1" fill="#ff0"/><rect x="309" y="373" width="1" height="1" fill="#ff0"/><rect x="267" y="381" width="1" height="1" fill="#ff0"/><rect x="164" y="395" width="1" height="1" fill="#ff0"/><rect x="61" y="372" width="1" height="1" fill="#ff0"/><rect x="193" y="341" width="1" height="1" fill="#ff0"/><rect x="124" y="387" width="1" height="1" fill="#ff0"/><rect x="183" y="396" width="1" height="1" fill="#ff0"/><rect x="124" y="388" width="1" height="1" fill="#ff0"/><rect x="163" y="364" width="1" height="1" fill="#ff0"/><rect x="176" y="347" width="1" height="1" fill="#ff0"/><rect x="157" y="365" width="1" height="1" fill="#ff0"/><rect x="195" y="376" width="1" height="1" fill="#ff0"/><rect x="169" y="379" width="1" height="1" fill="#ff0"/><rect x="223" y="385" width="1" height="1" fill="#ff0"/><rect x="116" y="390" width="1" height="1" fill="#ff0"/><rect x="264" y="319" width="1" height="1" fill="#ff0"/><rect x="169" y="374" width="1" height="1" fill="#ff0"/><rect x="53" y="433" width="1" height="1" fill="#ff0"/><rect x="173" y="381" width="1" height="1" fill="#ff0"/><rect x="96" y="356" width="1" height="1" fill="#ff0"/><rect x="291" y="385" width="1" height="1" fill="#ff0"/><rect x="74" y="375" width="1" height="1" fill="#ff0"/><rect x="96" y="383" width="1" height="1" fill="#ff0"/><rect x="147" y="403" width="1" height="1" fill="#ff0"/><rect x="130" y="358" width="1" height="1" fill="#ff0"/><rect x="94" y="373" width="1" height="1" fill="#ff0"/><rect x="171" y="334" width="1" height="1" fill="#ff0"/><rect x="141" y="322" width="1" height="1" fill="#ff0"/><rect x="228" y="328" width="1" height="1" fill="#ff0"/><rect x="142" y="399" width="1" height="1" fill="#ff0"/><rect x="260" y="317" width="1" height="1" fill="#ff0"/><rect x="122" y="387" width="1" height="1" fill="#ff0"/><rect x="67" y="414" width="1" height="1" fill="#ff0"/><rect x="206" y="368" width="1" height="1" fill="#ff0"/><rect x="101" y="374" width="1" height="1" fill="#ff0"/><rect x="77" y="426" width="1" height="1" fill="#ff0"/><rect x="271" y="344" width="1" height="1" fill="#ff0"/><rect x="55" y="443" width="1" height="1" fill="#ff0"/><rect x="65" y="404" width="1" height="1" fill="#ff0"/><rect x="197" y="396" width="1" height="1" fill="#ff0"/><rect x="332" y="338" width="1" height="1" fill="#ff0"/><rect x="107" y="352" width="1" height="1" fill="#ff0"/><rect x="231" y="316" width="1" height="1" fill="#ff0"/><rect x="247" y="363" width="1" height="1" fill="#ff0"/><rect x="312" y="314" width="1" height="1" fill="#ff0"/><rect x="60" y="420" width="1" height="1" fill="#ff0"/><rect x="264" y="348" width="1" height="1" fill="#ff0"/><rect x="124" y="381" width="1" height="1" fill="#ff0"/><rect x="222" y="331" width="1" height="1" fill="#ff0"/><rect x="154" y="386" width="1" height="1" fill="#ff0"/><rect x="147" y="359" width="1" height="1" fill="#ff0"/><rect x="310" y="378" width="1" height="1" fill="#ff0"/><rect x="227" y="337" width="1" height="1" fill="#ff0"/><rect x="123" y="398" width="1" height="1" fill="#ff0"/><rect x="104" y="419" width="1" height="1" fill="#ff0"/><rect x="80" y="381" width="1" height="1" fill="#ff0"/><rect x="191" y="388" width="1" height="1" fill="#ff0"/><rect x="325" y="383" width="1" height="1" fill="#ff0"/><rect x="301" y="371" width="1" height="1" fill="#ff0"/><rect x="154" y="347" width="1" height="1" fill="#ff0"/><rect x="311" y="331" width="1" height="1" fill="#ff0"/><rect x="303" y="378" width="1" height="1" fill="#ff0"/><rect x="121" y="374" width="1" height="1" fill="#ff0"/><rect x="249" y="315" width="1" height="1" fill="#ff0"/><rect x="275" y="375" width="1" height="1" fill="#ff0"/><rect x="139" y="404" width="1" height="1" fill="#ff0"/><rect x="56" y="416" width="1" height="1" fill="#ff0"/><rect x="166" y="341" width="1" height="1" fill="#ff0"/><rect x="172" y="352" width="1" height="1" fill="#ff0"/><rect x="103" y="413" width="1" height="1" fill="#ff0"/><rect x="128" y="328" width="1" height="1" fill="#ff0"/><rect x="93" y="382" width="1" height="1" fill="#ff0"/><rect x="120" y="402" width="1" height="1" fill="#ff0"/><rect x="68" y="371" width="1" height="1" fill="#ff0"/><rect x="72" y="358" width="1" height="1" fill="#ff0"/><rect x="324" y="344" width="1" height="1" fill="#ff0"/><rect x="174" y="350" width="1" height="1" fill="#ff0"/><rect x="136" y="338" width="1" height="1" fill="#ff0"/><rect x="101" y="414" width="1" height="1" fill="#ff0"/><rect x="162" y="323" width="1" height="1" fill="#ff0"/><rect x="353" y="382" width="1" height="1" fill="#ff0"/><rect x="282" y="325" width="1" height="1" fill="#ff0"/><rect x="272" y="385" width="1" height="1" fill="#ff0"/><rect x="120" y="384" width="1" height="1" fill="#ff0"/><rect x="257" y="340" width="1" height="1" fill="#ff0"/><rect x="136" y="344" width="1" height="1" fill="#ff0"/><rect x="77" y="422" width="1" height="1" fill="#ff0"/><rect x="221" y="338" width="1" height="1" fill="#ff0"/><rect x="81" y="347" width="1" height="1" fill="#ff0"/><rect x="176" y="378" width="1" height="1" fill="#ff0"/><rect x="178" y="384" width="1" height="1" fill="#ff0"/><rect x="349" y="360" width="1" height="1" fill="#ff0"/><rect x="95" y="381" width="1" height="1" fill="#ff0"/><rect x="244" y="322" width="1" height="1" fill="#ff0"/><rect x="248" y="386" width="1" height="1" fill="#ff0"/><rect x="267" y="355" width="1" height="1" fill="#ff0"/><rect x="181" y="358" width="1" height="1" fill="#ff0"/><rect x="212" y="391" width="1" height="1" fill="#ff0"/><rect x="190" y="329" width="1" height="1" fill="#ff0"/><rect x="197" y="321" width="1" height="1" fill="#ff0"/><rect x="147" y="382" width="1" height="1" fill="#ff0"/><rect x="88" y="361" width="1" height="1" fill="#ff0"/><rect x="122" y="342" width="1" height="1" fill="#ff0"/><rect x="325" y="319" width="1" height="1" fill="#ff0"/><rect x="323" y="372" width="1" height="1" fill="#ff0"/><rect x="71" y="407" width="1" height="1" fill="#ff0"/><rect x="302" y="317" width="1" height="1" fill="#ff0"/><rect x="158" y="341" width="1" height="1" fill="#ff0"/><rect x="85" y="365" width="1" height="1" fill="#ff0"/><rect x="335" y="375" width="1" height="1" fill="#ff0"/><rect x="248" y="374" width="1" height="1" fill="#ff0"/><rect x="185" y="401" width="1" height="1" fill="#ff0"/><rect x="148" y="366" width="1" height="1" fill="#ff0"/><rect x="105" y="415" width="1" height="1" fill="#ff0"/><rect x="196" y="322" width="1" height="1" fill="#ff0"/><rect x="161" y="391" width="1" height="1" fill="#ff0"/><rect x="268" y="367" width="1" height="1" fill="#ff0"/><rect x="94" y="384" width="1" height="1" fill="#ff0"/><rect x="309" y="349" width="1" height="1" fill="#ff0"/><rect x="272" y="370" width="1" height="1" fill="#ff0"/><rect x="138" y="344" width="1" height="1" fill="#ff0"/><rect x="192" y="326" width="1" height="1" fill="#ff0"/><rect x="284" y="384" width="1" height="1" fill="#ff0"/><rect x="137" y="383" width="1" height="1" fill="#ff0"/><rect x="141" y="396" width="1" height="1" fill="#ff0"/><rect x="90" y="364" width="1" height="1" fill="#ff0"/><rect x="181" y="338" width="1" height="1" fill="#ff0"/><rect x="221" y="383" width="1" height="1" fill="#ff0"/><rect x="76" y="383" width="1" height="1" fill="#ff0"/><rect x="157" y="335" width="1" height="1" fill="#ff0"/><rect x="55" y="423" width="1" height="1" fill="#ff0"/><rect x="148" y="361" width="1" height="1" fill="#ff0"/><rect x="357" y="344" width="1" height="1" fill="#ff0"/><rect x="256" y="373" width="1" height="1" fill="#ff0"/><rect x="93" y="392" width="1" height="1" fill="#ff0"/><rect x="74" y="389" width="1" height="1" fill="#ff0"/><rect x="128" y="349" width="1" height="1" fill="#ff0"/><rect x="295" y="381" width="1" height="1" fill="#ff0"/><rect x="333" y="378" width="1" height="1" fill="#ff0"/><rect x="217" y="370" width="1" height="1" fill="#ff0"/><rect x="87" y="386" width="1" height="1" fill="#ff0"/><rect x="76" y="379" width="1" height="1" fill="#ff0"/><rect x="179" y="397" width="1" height="1" fill="#ff0"/><rect x="191" y="335" width="1" height="1" fill="#ff0"/><rect x="318" y="374" width="1" height="1" fill="#ff0"/><rect x="177" y="330" width="1" height="1" fill="#ff0"/><rect x="51" y="441" width="1" height="1" fill="#ff0"/><rect x="281" y="303" width="1" height="1" fill="#ff0"/><rect x="143" y="336" width="1" height="1" fill="#ff0"/><rect x="340" y="358" width="1" height="1" fill="#ff0"/><rect x="330" y="342" width="1" height="1" fill="#ff0"/><rect x="143" y="356" width="1" height="1" fill="#ff0"/><rect x="165" y="383" width="1" height="1" fill="#ff0"/><rect x="191" y="394" width="1" height="1" fill="#ff0"/><rect x="67" y="415" width="1" height="1" fill="#ff0"/><rect x="79" y="409" width="1" height="1" fill="#ff0"/><rect x="202" y="311" width="1" height="1" fill="#ff0"/><rect x="355" y="375" width="1" height="1" fill="#ff0"/><rect x="238" y="347" width="1" height="1" fill="#ff0"/><rect x="148" y="371" width="1" height="1" fill="#ff0"/><rect x="288" y="368" width="1" height="1" fill="#ff0"/><rect x="301" y="353" width="1" height="1" fill="#ff0"/><rect x="139" y="335" width="1" height="1" fill="#ff0"/><rect x="152" y="387" width="1" height="1" fill="#ff0"/><rect x="299" y="325" width="1" height="1" fill="#ff0"/><rect x="223" y="320" width="1" height="1" fill="#ff0"/><rect x="55" y="358" width="1" height="1" fill="#ff0"/><rect x="181" y="352" width="1" height="1" fill="#ff0"/><rect x="339" y="345" width="1" height="1" fill="#ff0"/><rect x="190" y="366" width="1" height="1" fill="#ff0"/><rect x="149" y="401" width="1" height="1" fill="#ff0"/><rect x="260" y="349" width="1" height="1" fill="#ff0"/><rect x="85" y="393" width="1" height="1" fill="#ff0"/><rect x="115" y="384" width="1" height="1" fill="#ff0"/><rect x="315" y="345" width="1" height="1" fill="#ff0"/><rect x="168" y="349" width="1" height="1" fill="#ff0"/><rect x="205" y="337" width="1" height="1" fill="#ff0"/><rect x="284" y="378" width="1" height="1" fill="#ff0"/><rect x="112" y="397" width="1" height="1" fill="#ff0"/><rect x="213" y="366" width="1" height="1" fill="#ff0"/><rect x="316" y="350" width="1" height="1" fill="#ff0"/><rect x="270" y="369" width="1" height="1" fill="#ff0"/><rect x="280" y="384" width="1" height="1" fill="#ff0"/><rect x="168" y="351" width="1" height="1" fill="#ff0"/><rect x="244" y="325" width="1" height="1" fill="#ff0"/><rect x="203" y="384" width="1" height="1" fill="#ff0"/><rect x="80" y="431" width="1" height="1" fill="#ff0"/><rect x="228" y="347" width="1" height="1" fill="#ff0"/><rect x="96" y="361" width="1" height="1" fill="#ff0"/><rect x="297" y="372" width="1" height="1" fill="#ff0"/><rect x="242" y="344" width="1" height="1" fill="#ff0"/><rect x="342" y="324" width="1" height="1" fill="#ff0"/><rect x="276" y="332" width="1" height="1" fill="#ff0"/><rect x="127" y="407" width="1" height="1" fill="#ff0"/><rect x="128" y="406" width="1" height="1" fill="#ff0"/><rect x="134" y="391" width="1" height="1" fill="#ff0"/><rect x="210" y="327" width="1" height="1" fill="#ff0"/><rect x="242" y="352" width="1" height="1" fill="#ff0"/><rect x="218" y="338" width="1" height="1" fill="#ff0"/><rect x="65" y="374" width="1" height="1" fill="#ff0"/><rect x="298" y="358" width="1" height="1" fill="#ff0"/><rect x="209" y="351" width="1" height="1" fill="#ff0"/><rect x="121" y="343" width="1" height="1" fill="#ff0"/><rect x="70" y="370" width="1" height="1" fill="#ff0"/><rect x="228" y="365" width="1" height="1" fill="#ff0"/><rect x="67" y="385" width="1" height="1" fill="#ff0"/><rect x="57" y="402" width="1" height="1" fill="#ff0"/><rect x="297" y="350" width="1" height="1" fill="#ff0"/><rect x="106" y="389" width="1" height="1" fill="#ff0"/><rect x="272" y="358" width="1" height="1" fill="#ff0"/><rect x="73" y="365" width="1" height="1" fill="#ff0"/><rect x="90" y="408" width="1" height="1" fill="#ff0"/><rect x="271" y="303" width="1" height="1" fill="#ff0"/><rect x="321" y="293" width="1" height="1" fill="#ff0"/><rect x="266" y="315" width="1" height="1" fill="#ff0"/><rect x="213" y="321" width="1" height="1" fill="#ff0"/><rect x="83" y="424" width="1" height="1" fill="#ff0"/><rect x="312" y="335" width="1" height="1" fill="#ff0"/><rect x="289" y="381" width="1" height="1" fill="#ff0"/><rect x="158" y="384" width="1" height="1" fill="#ff0"/><rect x="215" y="371" width="1" height="1" fill="#ff0"/><rect x="192" y="386" width="1" height="1" fill="#ff0"/><rect x="128" y="375" width="1" height="1" fill="#ff0"/><rect x="154" y="389" width="1" height="1" fill="#ff0"/><rect x="129" y="343" width="1" height="1" fill="#ff0"/><rect x="121" y="363" width="1" height="1" fill="#ff0"/><rect x="299" y="342" width="1" height="1" fill="#ff0"/><rect x="125" y="337" width="1" height="1" fill="#ff0"/><rect x="161" y="331" width="1" height="1" fill="#ff0"/><rect x="171" y="340" width="1" height="1" fill="#ff0"/><rect x="299" y="354" width="1" height="1" fill="#ff0"/><rect x="284" y="390" width="1" height="1" fill="#ff0"/><rect x="169" y="398" width="1" height="1" fill="#ff0"/><rect x="93" y="352" width="1" height="1" fill="#ff0"/><rect x="156" y="328" width="1" height="1" fill="#ff0"/><rect x="275" y="377" width="1" height="1" fill="#ff0"/><rect x="329" y="326" width="1" height="1" fill="#ff0"/><rect x="166" y="329" width="1" height="1" fill="#ff0"/><rect x="106" y="397" width="1" height="1" fill="#ff0"/><rect x="145" y="371" width="1" height="1" fill="#ff0"/><rect x="228" y="332" width="1" height="1" fill="#ff0"/><rect x="349" y="375" width="1" height="1" fill="#ff0"/><rect x="208" y="384" width="1" height="1" fill="#ff0"/><rect x="229" y="316" width="1" height="1" fill="#ff0"/><rect x="240" y="320" width="1" height="1" fill="#ff0"/><rect x="108" y="411" width="1" height="1" fill="#ff0"/><rect x="175" y="401" width="1" height="1" fill="#ff0"/><rect x="103" y="421" width="1" height="1" fill="#ff0"/><rect x="302" y="350" width="1" height="1" fill="#ff0"/><rect x="106" y="416" width="1" height="1" fill="#ff0"/><rect x="245" y="364" width="1" height="1" fill="#ff0"/><rect x="246" y="321" width="1" height="1" fill="#ff0"/><rect x="180" y="359" width="1" height="1" fill="#ff0"/><rect x="153" y="332" width="1" height="1" fill="#ff0"/><rect x="328" y="373" width="1" height="1" fill="#ff0"/><rect x="139" y="393" width="1" height="1" fill="#ff0"/><rect x="98" y="348" width="1" height="1" fill="#ff0"/><rect x="78" y="395" width="1" height="1" fill="#ff0"/><rect x="206" y="349" width="1" height="1" fill="#ff0"/><rect x="76" y="396" width="1" height="1" fill="#ff0"/><rect x="252" y="355" width="1" height="1" fill="#ff0"/><rect x="302" y="369" width="1" height="1" fill="#ff0"/><rect x="129" y="382" width="1" height="1" fill="#ff0"/><rect x="349" y="347" width="1" height="1" fill="#ff0"/><rect x="208" y="383" width="1" height="1" fill="#ff0"/><rect x="303" y="302" width="1" height="1" fill="#ff0"/><rect x="301" y="322" width="1" height="1" fill="#ff0"/><rect x="144" y="398" width="1" height="1" fill="#ff0"/><rect x="55" y="390" width="1" height="1" fill="#ff0"/><rect x="260" y="313" width="1" height="1" fill="#ff0"/><rect x="107" y="366" width="1" height="1" fill="#ff0"/><rect x="361" y="324" width="1" height="1" fill="#ff0"/><rect x="298" y="315" width="1" height="1" fill="#ff0"/><rect x="251" y="306" width="1" height="1" fill="#ff0"/><rect x="301" y="369" width="1" height="1" fill="#ff0"/><rect x="269" y="372" width="1" height="1" fill="#ff0"/><rect x="254" y="337" width="1" height="1" fill="#ff0"/><rect x="153" y="382" width="1" height="1" fill="#ff0"/><rect x="245" y="315" width="1" height="1" fill="#ff0"/><rect x="154" y="373" width="1" height="1" fill="#ff0"/><rect x="322" y="339" width="1" height="1" fill="#ff0"/><rect x="127" y="398" width="1" height="1" fill="#ff0"/><rect x="70" y="430" width="1" height="1" fill="#ff0"/><rect x="215" y="361" width="1" height="1" fill="#ff0"/><rect x="122" y="384" width="1" height="1" fill="#ff0"/><rect x="86" y="377" width="1" height="1" fill="#ff0"/><rect x="252" y="312" width="1" height="1" fill="#ff0"/><rect x="127" y="386" width="1" height="1" fill="#ff0"/><rect x="291" y="384" width="1" height="1" fill="#ff0"/><rect x="134" y="392" width="1" height="1" fill="#ff0"/><rect x="254" y="339" width="1" height="1" fill="#ff0"/><rect x="185" y="322" width="1" height="1" fill="#ff0"/><rect x="65" y="433" width="1" height="1" fill="#ff0"/><rect x="269" y="358" width="1" height="1" fill="#ff0"/><rect x="285" y="357" width="1" height="1" fill="#ff0"/><rect x="264" y="334" width="1" height="1" fill="#ff0"/><rect x="65" y="362" width="1" height="1" fill="#ff0"/><rect x="172" y="329" width="1" height="1" fill="#ff0"/><rect x="202" y="353" width="1" height="1" fill="#ff0"/><rect x="178" y="372" width="1" height="1" fill="#ff0"/><rect x="129" y="381" width="1" height="1" fill="#ff0"/><rect x="187" y="372" width="1" height="1" fill="#ff0"/><rect x="246" y="332" width="1" height="1" fill="#ff0"/><rect x="198" y="327" width="1" height="1" fill="#ff0"/><rect x="167" y="338" width="1" height="1" fill="#ff0"/><rect x="261" y="335" width="1" height="1" fill="#ff0"/><rect x="278" y="331" width="1" height="1" fill="#ff0"/><rect x="256" y="375" width="1" height="1" fill="#ff0"/><rect x="219" y="307" width="1" height="1" fill="#ff0"/><rect x="292" y="368" width="1" height="1" fill="#ff0"/><rect x="174" y="329" width="1" height="1" fill="#ff0"/><rect x="233" y="328" width="1" height="1" fill="#ff0"/><rect x="172" y="348" width="1" height="1" fill="#ff0"/><rect x="232" y="378" width="1" height="1" fill="#ff0"/><rect x="226" y="392" width="1" height="1" fill="#ff0"/><rect x="151" y="356" width="1" height="1" fill="#ff0"/><rect x="135" y="380" width="1" height="1" fill="#ff0"/><rect x="247" y="320" width="1" height="1" fill="#ff0"/><rect x="140" y="400" width="1" height="1" fill="#ff0"/><rect x="194" y="362" width="1" height="1" fill="#ff0"/><rect x="229" y="331" width="1" height="1" fill="#ff0"/><rect x="143" y="359" width="1" height="1" fill="#ff0"/><rect x="167" y="354" width="1" height="1" fill="#ff0"/><rect x="147" y="388" width="1" height="1" fill="#ff0"/><rect x="85" y="429" width="1" height="1" fill="#ff0"/><rect x="283" y="292" width="1" height="1" fill="#ff0"/><rect x="321" y="366" width="1" height="1" fill="#ff0"/><rect x="155" y="372" width="1" height="1" fill="#ff0"/><rect x="188" y="338" width="1" height="1" fill="#ff0"/><rect x="242" y="374" width="1" height="1" fill="#ff0"/><rect x="95" y="352" width="1" height="1" fill="#ff0"/><rect x="188" y="332" width="1" height="1" fill="#ff0"/><rect x="102" y="397" width="1" height="1" fill="#ff0"/><rect x="116" y="399" width="1" height="1" fill="#ff0"/><rect x="120" y="367" width="1" height="1" fill="#ff0"/><rect x="269" y="342" width="1" height="1" fill="#ff0"/><rect x="78" y="428" width="1" height="1" fill="#ff0"/><rect x="269" y="379" width="1" height="1" fill="#ff0"/><rect x="260" y="355" width="1" height="1" fill="#ff0"/><rect x="226" y="370" width="1" height="1" fill="#ff0"/><rect x="127" y="413" width="1" height="1" fill="#ff0"/><rect x="236" y="371" width="1" height="1" fill="#ff0"/><rect x="317" y="365" width="1" height="1" fill="#ff0"/><rect x="246" y="339" width="1" height="1" fill="#ff0"/><rect x="207" y="362" width="1" height="1" fill="#ff0"/><rect x="216" y="354" width="1" height="1" fill="#ff0"/><rect x="332" y="361" width="1" height="1" fill="#ff0"/><rect x="245" y="370" width="1" height="1" fill="#ff0"/><rect x="324" y="327" width="1" height="1" fill="#ff0"/><rect x="174" y="366" width="1" height="1" fill="#ff0"/><rect x="363" y="371" width="1" height="1" fill="#ff0"/><rect x="211" y="377" width="1" height="1" fill="#ff0"/><rect x="212" y="312" width="1" height="1" fill="#ff0"/><rect x="172" y="355" width="1" height="1" fill="#ff0"/><rect x="227" y="331" width="1" height="1" fill="#ff0"/><rect x="233" y="382" width="1" height="1" fill="#ff0"/><rect x="334" y="350" width="1" height="1" fill="#ff0"/><rect x="232" y="308" width="1" height="1" fill="#ff0"/><rect x="257" y="329" width="1" height="1" fill="#ff0"/><rect x="353" y="338" width="1" height="1" fill="#ff0"/><rect x="307" y="381" width="1" height="1" fill="#ff0"/><rect x="92" y="348" width="1" height="1" fill="#ff0"/><rect x="198" y="378" width="1" height="1" fill="#ff0"/><rect x="106" y="376" width="1" height="1" fill="#ff0"/><rect x="345" y="351" width="1" height="1" fill="#ff0"/><rect x="275" y="374" width="1" height="1" fill="#ff0"/><rect x="107" y="404" width="1" height="1" fill="#ff0"/><rect x="317" y="334" width="1" height="1" fill="#ff0"/><rect x="276" y="358" width="1" height="1" fill="#ff0"/><rect x="204" y="301" width="1" height="1" fill="#ff0"/><rect x="166" y="379" width="1" height="1" fill="#ff0"/><rect x="236" y="354" width="1" height="1" fill="#ff0"/><rect x="291" y="344" width="1" height="1" fill="#ff0"/><rect x="278" y="379" width="1" height="1" fill="#ff0"/><rect x="196" y="329" width="1" height="1" fill="#ff0"/><rect x="285" y="382" width="1" height="1" fill="#ff0"/><rect x="95" y="420" width="1" height="1" fill="#ff0"/><rect x="57" y="437" width="1" height="1" fill="#ff0"/><rect x="83" y="424" width="1" height="1" fill="#ff0"/><rect x="251" y="377" width="1" height="1" fill="#ff0"/><rect x="218" y="353" width="1" height="1" fill="#ff0"/><rect x="171" y="368" width="1" height="1" fill="#ff0"/><rect x="243" y="388" width="1" height="1" fill="#ff0"/><rect x="235" y="362" width="1" height="1" fill="#ff0"/><rect x="347" y="324" width="1" height="1" fill="#ff0"/><rect x="337" y="377" width="1" height="1" fill="#ff0"/><rect x="286" y="310" width="1" height="1" fill="#ff0"/><rect x="173" y="341" width="1" height="1" fill="#ff0"/><rect x="83" y="361" width="1" height="1" fill="#ff0"/><rect x="240" y="314" width="1" height="1" fill="#ff0"/><rect x="231" y="318" width="1" height="1" fill="#ff0"/><rect x="353" y="378" width="1" height="1" fill="#ff0"/><rect x="296" y="362" width="1" height="1" fill="#ff0"/><rect x="108" y="388" width="1" height="1" fill="#ff0"/><rect x="362" y="326" width="1" height="1" fill="#ff0"/><rect x="225" y="312" width="1" height="1" fill="#ff0"/><rect x="48" y="375" width="1" height="1" fill="#ff0"/><rect x="68" y="384" width="1" height="1" fill="#ff0"/><rect x="201" y="324" width="1" height="1" fill="#ff0"/><rect x="149" y="386" width="1" height="1" fill="#ff0"/><rect x="284" y="380" width="1" height="1" fill="#ff0"/><rect x="59" y="391" width="1" height="1" fill="#ff0"/><rect x="262" y="309" width="1" height="1" fill="#ff0"/><rect x="79" y="369" width="1" height="1" fill="#ff0"/><rect x="222" y="326" width="1" height="1" fill="#ff0"/><rect x="83" y="352" width="1" height="1" fill="#ff0"/><rect x="68" y="402" width="1" height="1" fill="#ff0"/><rect x="240" y="382" width="1" height="1" fill="#ff0"/><rect x="280" y="318" width="1" height="1" fill="#ff0"/><rect x="233" y="311" width="1" height="1" fill="#ff0"/><rect x="199" y="361" width="1" height="1" fill="#ff0"/><rect x="66" y="427" width="1" height="1" fill="#ff0"/><rect x="265" y="363" width="1" height="1" fill="#ff0"/><rect x="209" y="334" width="1" height="1" fill="#ff0"/><rect x="341" y="349" width="1" height="1" fill="#ff0"/><rect x="62" y="414" width="1" height="1" fill="#ff0"/><rect x="263" y="357" width="1" height="1" fill="#ff0"/><rect x="291" y="352" width="1" height="1" fill="#ff0"/><rect x="330" y="310" width="1" height="1" fill="#ff0"/><rect x="91" y="360" width="1" height="1" fill="#ff0"/><rect x="68" y="409" width="1" height="1" fill="#ff0"/><rect x="64" y="372" width="1" height="1" fill="#ff0"/><rect x="93" y="423" width="1" height="1" fill="#ff0"/><rect x="197" y="328" width="1" height="1" fill="#ff0"/><rect x="113" y="383" width="1" height="1" fill="#ff0"/><rect x="342" y="356" width="1" height="1" fill="#ff0"/><rect x="301" y="383" width="1" height="1" fill="#ff0"/><rect x="222" y="372" width="1" height="1" fill="#ff0"/><rect x="149" y="399" width="1" height="1" fill="#ff0"/><rect x="289" y="333" width="1" height="1" fill="#ff0"/><rect x="195" y="388" width="1" height="1" fill="#ff0"/><rect x="102" y="375" width="1" height="1" fill="#ff0"/><rect x="165" y="396" width="1" height="1" fill="#ff0"/><rect x="240" y="343" width="1" height="1" fill="#ff0"/><rect x="293" y="336" width="1" height="1" fill="#ff0"/><rect x="177" y="374" width="1" height="1" fill="#ff0"/><rect x="254" y="367" width="1" height="1" fill="#ff0"/><rect x="317" y="314" width="1" height="1" fill="#ff0"/><rect x="128" y="397" width="1" height="1" fill="#ff0"/><rect x="302" y="356" width="1" height="1" fill="#ff0"/><rect x="251" y="320" width="1" height="1" fill="#ff0"/><rect x="129" y="347" width="1" height="1" fill="#ff0"/><rect x="198" y="386" width="1" height="1" fill="#ff0"/><rect x="183" y="398" width="1" height="1" fill="#ff0"/><rect x="72" y="433" width="1" height="1" fill="#ff0"/><rect x="238" y="373" width="1" height="1" fill="#ff0"/><rect x="182" y="380" width="1" height="1" fill="#ff0"/><rect x="324" y="333" width="1" height="1" fill="#ff0"/><rect x="76" y="429" width="1" height="1" fill="#ff0"/><rect x="97" y="349" width="1" height="1" fill="#ff0"/><rect x="333" y="328" width="1" height="1" fill="#ff0"/><rect x="261" y="379" width="1" height="1" fill="#ff0"/><rect x="179" y="354" width="1" height="1" fill="#ff0"/><rect x="299" y="319" width="1" height="1" fill="#ff0"/><rect x="63" y="417" width="1" height="1" fill="#ff0"/><rect x="196" y="351" width="1" height="1" fill="#ff0"/><rect x="329" y="373" width="1" height="1" fill="#ff0"/><rect x="236" y="355" width="1" height="1" fill="#ff0"/><rect x="195" y="383" width="1" height="1" fill="#ff0"/><rect x="81" y="393" width="1" height="1" fill="#ff0"/><rect x="48" y="373" width="1" height="1" fill="#ff0"/><rect x="168" y="324" width="1" height="1" fill="#ff0"/><rect x="288" y="316" width="1" height="1" fill="#ff0"/><rect x="114" y="403" width="1" height="1" fill="#ff0"/><rect x="337" y="346" width="1" height="1" fill="#ff0"/><rect x="124" y="360" width="1" height="1" fill="#ff0"/><rect x="193" y="369" width="1" height="1" fill="#ff0"/><rect x="192" y="378" width="1" height="1" fill="#ff0"/><rect x="94" y="427" width="1" height="1" fill="#ff0"/><rect x="162" y="374" width="1" height="1" fill="#ff0"/><rect x="314" y="381" width="1" height="1" fill="#ff0"/><rect x="147" y="342" width="1" height="1" fill="#ff0"/><rect x="104" y="333" width="1" height="1" fill="#ff0"/><rect x="121" y="412" width="1" height="1" fill="#ff0"/><rect x="148" y="355" width="1" height="1" fill="#ff0"/><rect x="144" y="379" width="1" height="1" fill="#ff0"/><rect x="131" y="351" width="1" height="1" fill="#ff0"/><rect x="239" y="374" width="1" height="1" fill="#ff0"/><rect x="111" y="361" width="1" height="1" fill="#ff0"/><rect x="144" y="364" width="1" height="1" fill="#ff0"/><rect x="138" y="339" width="1" height="1" fill="#ff0"/><rect x="309" y="377" width="1" height="1" fill="#ff0"/><rect x="156" y="402" width="1" height="1" fill="#ff0"/><rect x="221" y="364" width="1" height="1" fill="#ff0"/><rect x="140" y="384" width="1" height="1" fill="#ff0"/><rect x="168" y="385" width="1" height="1" fill="#ff0"/><rect x="142" y="408" width="1" height="1" fill="#ff0"/><rect x="54" y="379" width="1" height="1" fill="#ff0"/><rect x="189" y="393" width="1" height="1" fill="#ff0"/><rect x="225" y="357" width="1" height="1" fill="#ff0"/><rect x="287" y="324" width="1" height="1" fill="#ff0"/><rect x="279" y="335" width="1" height="1" fill="#ff0"/><rect x="217" y="333" width="1" height="1" fill="#ff0"/><rect x="64" y="387" width="1" height="1" fill="#ff0"/><rect x="238" y="356" width="1" height="1" fill="#ff0"/><rect x="350" y="371" width="1" height="1" fill="#ff0"/><rect x="203" y="313" width="1" height="1" fill="#ff0"/><rect x="281" y="318" width="1" height="1" fill="#ff0"/><rect x="135" y="354" width="1" height="1" fill="#ff0"/><rect x="345" y="340" width="1" height="1" fill="#ff0"/><rect x="155" y="329" width="1" height="1" fill="#ff0"/><rect x="189" y="377" width="1" height="1" fill="#ff0"/><rect x="82" y="400" width="1" height="1" fill="#ff0"/><rect x="237" y="314" width="1" height="1" fill="#ff0"/><rect x="336" y="365" width="1" height="1" fill="#ff0"/><rect x="241" y="368" width="1" height="1" fill="#ff0"/><rect x="147" y="394" width="1" height="1" fill="#ff0"/><rect x="315" y="381" width="1" height="1" fill="#ff0"/><rect x="298" y="377" width="1" height="1" fill="#ff0"/><rect x="276" y="354" width="1" height="1" fill="#ff0"/><rect x="292" y="349" width="1" height="1" fill="#ff0"/><rect x="251" y="380" width="1" height="1" fill="#ff0"/><rect x="115" y="344" width="1" height="1" fill="#ff0"/><rect x="315" y="308" width="1" height="1" fill="#ff0"/><rect x="71" y="375" width="1" height="1" fill="#ff0"/><rect x="67" y="391" width="1" height="1" fill="#ff0"/><rect x="332" y="327" width="1" height="1" fill="#ff0"/><rect x="165" y="357" width="1" height="1" fill="#ff0"/><rect x="334" y="349" width="1" height="1" fill="#ff0"/><rect x="264" y="352" width="1" height="1" fill="#ff0"/><rect x="49" y="436" width="1" height="1" fill="#ff0"/><rect x="180" y="347" width="1" height="1" fill="#ff0"/><rect x="263" y="337" width="1" height="1" fill="#ff0"/><rect x="243" y="365" width="1" height="1" fill="#ff0"/><rect x="70" y="388" width="1" height="1" fill="#ff0"/><rect x="260" y="344" width="1" height="1" fill="#ff0"/><rect x="353" y="288" width="1" height="1" fill="#ff0"/><rect x="242" y="297" width="1" height="1" fill="#ff0"/><rect x="246" y="319" width="1" height="1" fill="#ff0"/><rect x="51" y="373" width="1" height="1" fill="#ff0"/><rect x="135" y="359" width="1" height="1" fill="#ff0"/><rect x="145" y="367" width="1" height="1" fill="#ff0"/><rect x="303" y="360" width="1" height="1" fill="#ff0"/><rect x="217" y="374" width="1" height="1" fill="#ff0"/><rect x="140" y="376" width="1" height="1" fill="#ff0"/><rect x="132" y="390" width="1" height="1" fill="#ff0"/><rect x="307" y="323" width="1" height="1" fill="#ff0"/><rect x="323" y="375" width="1" height="1" fill="#ff0"/><rect x="246" y="313" width="1" height="1" fill="#ff0"/><rect x="133" y="337" width="1" height="1" fill="#ff0"/><rect x="70" y="424" width="1" height="1" fill="#ff0"/><rect x="241" y="371" width="1" height="1" fill="#ff0"/><rect x="336" y="301" width="1" height="1" fill="#ff0"/><rect x="76" y="393" width="1" height="1" fill="#ff0"/><rect x="79" y="379" width="1" height="1" fill="#ff0"/><rect x="48" y="392" width="1" height="1" fill="#ff0"/><rect x="215" y="324" width="1" height="1" fill="#ff0"/><rect x="85" y="409" width="1" height="1" fill="#ff0"/><rect x="232" y="367" width="1" height="1" fill="#ff0"/><rect x="135" y="390" width="1" height="1" fill="#ff0"/><rect x="164" y="310" width="1" height="1" fill="#ff0"/><rect x="287" y="378" width="1" height="1" fill="#ff0"/><rect x="63" y="398" width="1" height="1" fill="#ff0"/><rect x="205" y="365" width="1" height="1" fill="#ff0"/><rect x="242" y="317" width="1" height="1" fill="#ff0"/><rect x="271" y="321" width="1" height="1" fill="#ff0"/><rect x="125" y="401" width="1" height="1" fill="#ff0"/><rect x="339" y="376" width="1" height="1" fill="#ff0"/><rect x="69" y="420" width="1" height="1" fill="#ff0"/><rect x="328" y="358" width="1" height="1" fill="#ff0"/><rect x="244" y="340" width="1" height="1" fill="#ff0"/><rect x="218" y="329" width="1" height="1" fill="#ff0"/><rect x="309" y="366" width="1" height="1" fill="#ff0"/><rect x="49" y="400" width="1" height="1" fill="#ff0"/><rect x="269" y="374" width="1" height="1" fill="#ff0"/><rect x="201" y="392" width="1" height="1" fill="#ff0"/><rect x="180" y="394" width="1" height="1" fill="#ff0"/><rect x="345" y="350" width="1" height="1" fill="#ff0"/><rect x="279" y="315" width="1" height="1" fill="#ff0"/><rect x="49" y="389" width="1" height="1" fill="#ff0"/><rect x="199" y="389" width="1" height="1" fill="#ff0"/><rect x="91" y="379" width="1" height="1" fill="#ff0"/><rect x="311" y="372" width="1" height="1" fill="#ff0"/><rect x="204" y="339" width="1" height="1" fill="#ff0"/><rect x="203" y="324" width="1" height="1" fill="#ff0"/><rect x="312" y="359" width="1" height="1" fill="#ff0"/><rect x="198" y="321" width="1" height="1" fill="#ff0"/><rect x="70" y="368" width="1" height="1" fill="#ff0"/><rect x="98" y="364" width="1" height="1" fill="#ff0"/><rect x="94" y="353" width="1" height="1" fill="#ff0"/><rect x="62" y="392" width="1" height="1" fill="#ff0"/><rect x="51" y="393" width="1" height="1" fill="#ff0"/><rect x="98" y="384" width="1" height="1" fill="#ff0"/><rect x="55" y="399" width="1" height="1" fill="#ff0"/><rect x="51" y="410" width="1" height="1" fill="#ff0"/><rect x="52" y="413" width="1" height="1" fill="#ff0"/><rect x="90" y="369" width="1" height="1" fill="#ff0"/><rect x="92" y="390" width="1" height="1" fill="#ff0"/><rect x="71" y="431" width="1" height="1" fill="#ff0"/><rect x="89" y="383" width="1" height="1" fill="#ff0"/><rect x="69" y="425" width="1" height="1" fill="#ff0"/><rect x="72" y="430" width="1" height="1" fill="#ff0"/><rect x="54" y="438" width="1" height="1" fill="#ff0"/><rect x="70" y="425" width="1" height="1" fill="#ff0"/><rect x="91" y="379" width="1" height="1" fill="#ff0"/><rect x="93" y="382" width="1" height="1" fill="#ff0"/><rect x="56" y="421" width="1" height="1" fill="#ff0"/><rect x="92" y="380" width="1" height="1" fill="#ff0"/><rect x="81" y="381" width="1" height="1" fill="#ff0"/><rect x="50" y="431" width="1" height="1" fill="#ff0"/><rect x="70" y="370" width="1" height="1" fill="#ff0"/><rect x="97" y="378" width="1" height="1" fill="#ff0"/><rect x="61" y="437" width="1" height="1" fill="#ff0"/><rect x="77" y="400" width="1" height="1" fill="#ff0"/><rect x="96" y="408" width="1" height="1" fill="#ff0"/><rect x="58" y="440" width="1" height="1" fill="#ff0"/><rect x="49" y="384" width="1" height="1" fill="#ff0"/><rect x="93" y="413" width="1" height="1" fill="#ff0"/><rect x="48" y="402" width="1" height="1" fill="#ff0"/><rect x="60" y="393" width="1" height="1" fill="#ff0"/><rect x="95" y="366" width="1" height="1" fill="#ff0"/><rect x="62" y="392" width="1" height="1" fill="#ff0"/><rect x="63" y="380" width="1" height="1" fill="#ff0"/><rect x="61" y="372" width="1" height="1" fill="#ff0"/><rect x="83" y="360" width="1" height="1" fill="#ff0"/><rect x="66" y="363" width="1" height="1" fill="#ff0"/><rect x="78" y="412" width="1" height="1" fill="#ff0"/><rect x="81" y="406" width="1" height="1" fill="#ff0"/><rect x="53" y="441" width="1" height="1" fill="#ff0"/><rect x="80" y="412" width="1" height="1" fill="#ff0"/><rect x="53" y="384" width="1" height="1" fill="#ff0"/><rect x="55" y="385" width="1" height="1" fill="#ff0"/><rect x="62" y="411" width="1" height="1" fill="#ff0"/><rect x="96" y="359" width="1" height="1" fill="#ff0"/><rect x="91" y="350" width="1" height="1" fill="#ff0"/><rect x="79" y="358" width="1" height="1" fill="#ff0"/><rect x="80" y="385" width="1" height="1" fill="#ff0"/><rect x="65" y="409" width="1" height="1" fill="#ff0"/><rect x="77" y="413" width="1" height="1" fill="#ff0"/><rect x="81" y="363" width="1" height="1" fill="#ff0"/><rect x="85" y="411" width="1" height="1" fill="#ff0"/><rect x="49" y="418" width="1" height="1" fill="#ff0"/><rect x="70" y="370" width="1" height="1" fill="#ff0"/><rect x="76" y="392" width="1" height="1" fill="#ff0"/><rect x="79" y="388" width="1" height="1" fill="#ff0"/><rect x="83" y="386" width="1" height="1" fill="#ff0"/><rect x="77" y="414" width="1" height="1" fill="#ff0"/><rect x="54" y="410" width="1" height="1" fill="#ff0"/><rect x="94" y="351" width="1" height="1" fill="#ff0"/><rect x="63" y="394" width="1" height="1" fill="#ff0"/><rect x="75" y="398" width="1" height="1" fill="#ff0"/><rect x="57" y="381" width="1" height="1" fill="#ff0"/><rect x="52" y="427" width="1" height="1" fill="#ff0"/><rect x="62" y="424" width="1" height="1" fill="#ff0"/><rect x="58" y="436" width="1" height="1" fill="#ff0"/><rect x="75" y="420" width="1" height="1" fill="#ff0"/><rect x="81" y="384" width="1" height="1" fill="#ff0"/><rect x="412" y="332" width="1" height="1" fill="#ff0"/><rect x="411" y="348" width="1" height="1" fill="#ff0"/><rect x="400" y="314" width="1" height="1" fill="#ff0"/><rect x="381" y="310" width="1" height="1" fill="#ff0"/><rect x="409" y="290" width="1" height="1" fill="#ff0"/><rect x="411" y="326" width="1" height="1" fill="#ff0"/><rect x="423" y="349" width="1" height="1" fill="#ff0"/><rect x="393" y="336" width="1" height="1" fill="#ff0"/><rect x="420" y="312" width="1" height="1" fill="#ff0"/><rect x="379" y="291" width="1" height="1" fill="#ff0"/><rect x="439" y="331" width="1" height="1" fill="#ff0"/><rect x="440" y="320" width="1" height="1" fill="#ff0"/><rect x="394" y="366" width="1" height="1" fill="#ff0"/><rect x="366" y="323" width="1" height="1" fill="#ff0"/><rect x="419" y="321" width="1" height="1" fill="#ff0"/><rect x="424" y="336" width="1" height="1" fill="#ff0"/><rect x="407" y="186" width="1" height="1" fill="#ff0"/><polyline points="47.2,230.8 48.6,214.6 50.2,208.9 52.8,265.5 54.4,229.7 56.0,227.3 58.5,280.5 60.2,265.5 62.5,198.0 64.3,240.0 66.2,198.0 68.0,235.4 70.1,205.4 71.7,211.2 74.0,225.0 76.3,203.1 78.6,296.6 82.1,200.8 83.7,210.0 86.7,259.7 88.6,217.0 92.3,276.5 96.4,208.9 100.6,275.8 104.5,223.9 108.0,207.3 109.8,213.5 112.1,211.2 116.7,217.0 120.2,234.3 124.8,244.2 130.6,232.0 135.2,219.3 139.8,215.1 140.0,215.4 141.9,217.3 143.8,225.0 145.8,242.3 147.3,255.8 148.5,256.2 150.0,225.0 151.9,224.6 154.4,243.3 156.3,238.5 158.5,220.2 160.6,256.7 162.7,234.6 164.4,221.2 166.3,258.7 168.5,226.0 170.8,236.5 173.7,236.9 177.5,236.2 179.4,229.8 181.3,248.1 183.3,234.6 185.4,264.4 187.3,230.8 189.0,237.5 191.5,255.8 193.8,233.7 195.8,251.9 199.6,232.3 201.5,248.1 203.5,269.2 206.3,238.5 208.3,238.1 211.2,246.2 215.4,269.2 219.8,239.4 221.7,241.3 224.6,241.3 226.9,246.2 230.4,260.6 233.7,275.4 236.2,268.3 240.0,251.9 242.9,247.1 243.8,248.1 245.4,281.7 247.3,255.8 249.2,246.5 250.0,255.0 251.2,281.2 253.0,255.0 255.5,247.5 257.5,267.5 259.5,253.8 262.0,275.0 263.8,272.5 265.5,283.8 267.5,252.5 270.0,265.0 271.2,271.2 273.8,261.2 277.0,285.0 279.5,261.2 282.0,261.2 285.0,272.5 287.0,280.0 288.2,312.5 289.5,352.5 291.2,302.5 293.0,293.8 297.5,285.0 299.5,295.0 302.0,271.2 303.8,272.5 308.0,297.5 310.5,275.0 312.5,293.8 314.5,276.2 317.0,291.2 319.5,293.8 323.0,278.8 324.5,296.2 326.2,280.0 330.5,298.8 335.0,282.5 337.0,285.0 339.5,302.5 340.5,287.5 346.2,291.2 348.0,300.0 350.5,290.0 352.1,293.8 354.2,307.6 355.9,297.0 358.5,307.6 361.6,299.1 363.1,310.7 365.9,295.9 368.6,312.9 372.2,298.1 374.9,305.5 377.5,316.0 380.0,332.9 383.8,316.0 388.1,305.5 390.6,326.6 392.3,311.8 395.5,317.1 398.6,323.4 400.7,313.9 403.9,327.7 406.0,332.9 410.3,320.3 414.5,330.8 418.1,325.5 420.8,329.8 424.0,341.4 427.2,342.5 430.3,337.2 432.5,332.9 434.6,349.9 436.7,334.0 438.8,339.3 440.9,352.0 442.6,344.6" fill="none" stroke="#18b4f4" stroke-width="1" stroke-linejoin="miter" shape-rendering="crispEdges"/><text x="47.0" y="166.6" text-anchor="start" fill="#000" font-size="10.6">MB/s</text><text x="429.0" y="166.6" text-anchor="start" fill="#000" font-size="10.6">ms</text><text x="41.6" y="174.4" text-anchor="end" fill="#000" font-size="10.6">100</text><text x="41.6" y="205.3" text-anchor="end" fill="#000" font-size="10.6">90</text><text x="41.6" y="236.2" text-anchor="end" fill="#000" font-size="10.6">80</text><text x="41.6" y="267.1" text-anchor="end" fill="#000" font-size="10.6">70</text><text x="41.6" y="298.0" text-anchor="end" fill="#000" font-size="10.6">60</text><text x="41.6" y="328.9" text-anchor="end" fill="#000" font-size="10.6">50</text><text x="41.6" y="359.8" text-anchor="end" fill="#000" font-size="10.6">40</text><text x="41.6" y="390.7" text-anchor="end" fill="#000" font-size="10.6">30</text><text x="41.6" y="421.6" text-anchor="end" fill="#000" font-size="10.6">20</text><text x="41.6" y="452.5" text-anchor="end" fill="#000" font-size="10.6">10</text><text x="447.2" y="173.7" text-anchor="start" fill="#000" font-size="10.6">50</text><text x="447.2" y="204.6" text-anchor="start" fill="#000" font-size="10.6">45</text><text x="447.2" y="235.5" text-anchor="start" fill="#000" font-size="10.6">40</text><text x="447.2" y="266.4" text-anchor="start" fill="#000" font-size="10.6">35</text><text x="447.2" y="297.3" text-anchor="start" fill="#000" font-size="10.6">30</text><text x="447.2" y="328.2" text-anchor="start" fill="#000" font-size="10.6">25</text><text x="447.2" y="359.1" text-anchor="start" fill="#000" font-size="10.6">20</text><text x="447.2" y="390.0" text-anchor="start" fill="#000" font-size="10.6">15</text><text x="447.2" y="420.9" text-anchor="start" fill="#000" font-size="10.6">10</text><text x="447.2" y="451.8" text-anchor="start" fill="#000" font-size="10.6">5</text><text x="47.5" y="493.9" text-anchor="middle" fill="#000" font-size="10.6">0</text><text x="87.0" y="493.9" text-anchor="middle" fill="#000" font-size="10.6">50</text><text x="126.5" y="493.9" text-anchor="middle" fill="#000" font-size="10.6">100</text><text x="166.0" y="493.9" text-anchor="middle" fill="#000" font-size="10.6">150</text><text x="205.5" y="493.9" text-anchor="middle" fill="#000" font-size="10.6">200</text><text x="245.0" y="493.9" text-anchor="middle" fill="#000" font-size="10.6">250</text><text x="284.5" y="493.9" text-anchor="middle" fill="#000" font-size="10.6">300</text><text x="324.0" y="493.9" text-anchor="middle" fill="#000" font-size="10.6">350</text><text x="363.5" y="493.9" text-anchor="middle" fill="#000" font-size="10.6">400</text><text x="403.0" y="493.9" text-anchor="middle" fill="#000" font-size="10.6">450</text><text x="426.4" y="493.9" text-anchor="start" fill="#000" font-size="10.6">500gB</text><text x="50.2" y="181.2" text-anchor="start" fill="#b4b4b4" font-size="11">trial version</text></svg><div class="btn hotdef" style="left:479px;top:151px;width:73px;height:21px;"></div><span class="t" style="left:503.80px;top:154.00px;transform:scaleX(0.8602);">Start</span><div class="sep" style="left:470px;top:182px;width:101px;height:1px;"></div><div class="rb" style="left:475px;top:189px;width:12px;height:12px;"><div style="left:2px;top:2px;width:6.4px;height:6.4px;border-radius:50%;background:radial-gradient(circle at 42% 38%,#a6e4fb 0,#2588cc 32%,#0a3570 72%)"></div></div><span class="t" style="left:491.00px;top:186.90px;transform:scaleX(0.8924);">Read</span><div class="rb" style="left:475px;top:205px;width:12px;height:12px;"></div><span class="t" style="left:490.80px;top:202.80px;transform:scaleX(0.9071);">Write</span><div class="sep" style="left:470px;top:221px;width:101px;height:1px;"></div><div class="cb" style="left:475px;top:229px;width:13px;height:13px;"></div><span class="t" style="left:491.00px;top:228.00px;transform:scaleX(0.8732);">Short stroke</span><div style="left:475px;top:249px;width:62px;height:20px;border:1px solid #afafaf;background:#f4f4f4"></div><span class="t" style="left:477.70px;top:250.80px;color:#8a8a8a;transform:scaleX(0.9432);">40</span><div class="spbtn" style="left:520px;top:251px;width:15px;height:8px;"></div><div class="spbtn" style="left:520px;top:259px;width:15px;height:8px;"></div><svg style="left:520px;top:251px" width="15" height="16" viewBox="0 0 15 16" ><path d="M5 5.2 L7.5 2.6 L10 5.2Z M5 10.8 L7.5 13.4 L10 10.8Z" fill="#8a8a8a"/></svg><span class="t" style="left:547.30px;top:250.80px;transform:scaleX(0.9123);">gB</span><div class="cb" style="left:475px;top:278px;width:13px;height:13px;"><svg style="left:0;top:0" width="11" height="11" viewBox="0 0 11 11"><path d="M2.3 4.4 L3.6 4.4 L4.7 6.6 L8 1.4 L9 1.4 L4.9 9 L4.2 9Z" fill="#3f5493" stroke="#3f5493" stroke-width=".5" stroke-linejoin="round"/></svg></div><span class="t" style="left:491.00px;top:277.20px;transform:scaleX(0.8762);">Transfer rate</span><div class="sep" style="left:470px;top:293px;width:101px;height:1px;"></div><span class="t" style="left:475.00px;top:295.30px;transform:scaleX(0.8465);">Minimum</span><div class="vb" style="left:476px;top:312px;width:91px;height:14px;"></div><span class="t" style="left:490.90px;top:310.90px;font-size:12.5px;line-height:16px;font-weight:bold;color:#1db2f5;transform:scaleX(1.0438);">40.6 MB/s</span><span class="t" style="left:475.00px;top:327.70px;transform:scaleX(0.8401);">Maximum</span><div class="vb" style="left:476px;top:344px;width:91px;height:14px;"></div><span class="t" style="left:490.90px;top:342.90px;font-size:12.5px;line-height:16px;font-weight:bold;color:#1db2f5;transform:scaleX(1.0438);">90.9 MB/s</span><span class="t" style="left:474.80px;top:357.60px;transform:scaleX(0.8924);">Average</span><div class="vb" style="left:476px;top:375px;width:91px;height:14px;"></div><span class="t" style="left:490.90px;top:373.90px;font-size:12.5px;line-height:16px;font-weight:bold;color:#1db2f5;transform:scaleX(1.0438);">68.0 MB/s</span><div class="sep" style="left:470px;top:397px;width:101px;height:1px;"></div><div class="cb" style="left:475px;top:403px;width:13px;height:13px;"><svg style="left:0;top:0" width="11" height="11" viewBox="0 0 11 11"><path d="M2.3 4.4 L3.6 4.4 L4.7 6.6 L8 1.4 L9 1.4 L4.9 9 L4.2 9Z" fill="#3f5493" stroke="#3f5493" stroke-width=".5" stroke-linejoin="round"/></svg></div><span class="t" style="left:491.00px;top:401.60px;transform:scaleX(0.8688);">Access time</span><div class="vb" style="left:476px;top:419px;width:91px;height:14px;"></div><span class="t" style="left:499.15px;top:417.90px;font-size:12.5px;line-height:16px;font-weight:bold;color:#ffff00;transform:scaleX(0.9526);">18.1 ms</span><div class="cb" style="left:475px;top:437px;width:13px;height:13px;"><svg style="left:0;top:0" width="11" height="11" viewBox="0 0 11 11"><path d="M2.3 4.4 L3.6 4.4 L4.7 6.6 L8 1.4 L9 1.4 L4.9 9 L4.2 9Z" fill="#3f5493" stroke="#3f5493" stroke-width=".5" stroke-linejoin="round"/></svg></div><span class="t" style="left:491.00px;top:435.60px;transform:scaleX(0.8572);">Burst rate</span><div class="vb" style="left:476px;top:453px;width:91px;height:14px;"></div><span class="t" style="left:487.90px;top:451.90px;font-size:12.5px;line-height:16px;font-weight:bold;color:#fff;transform:scaleX(1.0244);">146.1 MB/s</span><span class="t" style="left:475.00px;top:468.70px;transform:scaleX(0.8733);">CPU usage</span><div class="vb" style="left:476px;top:486px;width:91px;height:14px;"></div><span class="t" style="left:507.00px;top:484.90px;font-size:12.5px;line-height:16px;font-weight:bold;color:#fff;transform:scaleX(0.9825);">6.2%</span></div></div>
<div class="win" style="left:600px"><div style="left:-1px;top:-1px;width:594px;height:540px"><svg style="left:10.5px;top:10.8px" width="15" height="15" viewBox="0 0 15.4 15.4" ><path d="M.6 7.6 L7.2 .8 L14.4 5.4 L7.6 14.4Z" fill="#1a1a1a" stroke="#000" stroke-width=".8"/><path d="M1 8.2 L7.6 14.8 L7.6 13" fill="#555"/><ellipse cx="8.4" cy="5.8" rx="3.9" ry="3.3" transform="rotate(-35 8.4 5.8)" fill="#f0a838" stroke="#7a4a08" stroke-width=".7"/><ellipse cx="8.4" cy="5.4" rx="1.2" ry="1" fill="#fde8b0"/><path d="M7 6.6 L5.6 11" stroke="#d8d8d8" stroke-width="1.5"/><path d="M4.4 10 L6.6 12" stroke="#bbb" stroke-width="1.4"/></svg><span class="t" style="left:29.80px;top:10.60px;transform:scaleX(0.9847);">HD Tune Pro 5.00 - Hard Disk Utility (trial version)</span><div style="left:487px;top:10px;width:31px;height:17px;border:1px solid #8d9db7;border-radius:3px;background:linear-gradient(#c3d0e0,#d3deeb);box-shadow:inset 0 0 0 1px rgba(255,255,255,.45)"></div><div style="left:520px;top:10px;width:31px;height:17px;border:1px solid #8d9db7;border-radius:3px;background:linear-gradient(#c3d0e0,#d3deeb);box-shadow:inset 0 0 0 1px rgba(255,255,255,.45)"></div><div style="left:553px;top:10px;width:31px;height:17px;border:1px solid #8d9db7;border-radius:3px;background:linear-gradient(#c3d0e0,#d3deeb);box-shadow:inset 0 0 0 1px rgba(255,255,255,.45)"></div><div style="left:497px;top:18px;width:11px;height:5px;border:1px solid #4a4f5c;border-radius:2px;background:#f4f4f4"></div><div style="left:530px;top:14px;width:11px;height:9px;border:1px solid #4a4f5c;border-radius:1px;background:#f4f4f4"></div><div style="left:533px;top:17px;width:5px;height:3px;border:1px solid #4a4f5c;background:#c9d5e4"></div><svg style="left:562px;top:14px" width="13" height="10" viewBox="0 0 13 10" ><path d="M1 1 L4.4 1 L6.5 3.1 L8.6 1 L12 1 L8.7 4.9 L12 8.8 L8.6 8.8 L6.5 6.6 L4.4 8.8 L1 8.8 L4.3 4.9Z" fill="#f6f6f6" stroke="#4a4f5c" stroke-width="1" stroke-linejoin="round"/></svg><div style="left:8px;top:30px;width:578px;height:482px;background:#f0f0f0"></div><div style="left:8px;top:30px;width:578px;height:19px;background:linear-gradient(#e1e7f0,#dde4ee)"></div><span class="t" style="left:14.70px;top:31.70px;color:#1c1c2c;">File</span><div style="left:15px;top:46px;width:7px;height:1px;background:#1c1c2c"></div><span class="t" style="left:51.00px;top:31.70px;color:#1c1c2c;">Help</span><div style="left:51.5px;top:46px;width:8.5px;height:1px;background:#1c1c2c"></div><div style="left:8px;top:49px;width:578px;height:45px;background:linear-gradient(#f1f1f1,#e6e6e6 45%,#d4d4d4)"></div><div style="left:8px;top:94px;width:578px;height:1px;background:#000"></div><div style="left:8px;top:95px;width:578px;height:1px;background:#fff"></div><div class="btn" style="left:19px;top:58px;width:224px;height:21px;"></div><span class="t" style="left:22.60px;top:61.00px;transform:scaleX(0.9069);">HITACHI HTS547550A9E</span><span class="t" style="left:161.40px;top:61.00px;transform:scaleX(0.8950);">(500 gB)</span><div class="arrow" style="left:231px;top:67px;width:7px;height:4px;"></div><div class="btn" style="left:254px;top:56px;width:27px;height:26px;"></div><svg style="left:263px;top:59.6px" width="10.5" height="17.5" viewBox="0 0 10.5 17.5" shape-rendering="geometricPrecision"><path d="M4 0 H7.6 V10.1 Q9.9 11.3 9.9 13.6 Q9.9 17 5.8 17 Q2.4 17 1.8 14.6 L4 10.4Z" fill="#000"/><path d="M2.6 .4 H6.1 V10 Q8.3 11.2 8.3 13.3 Q8.3 16.3 4.4 16.3 Q.6 16.3 .6 13.3 Q.6 11.2 2.6 10Z" fill="#f01010" stroke="#000" stroke-width=".35"/><rect x="2.6" y=".4" width="3.5" height="3.8" fill="#38d8e8"/><path d="M2.3 11.8 Q1.7 13.4 3 14.2" stroke="#fff" stroke-width="1.3" fill="none"/><path d="M.8 13.3 Q.8 11.4 2.8 10.2 V.6" fill="none" stroke="#a0e8f4" stroke-width=".7"/></svg><span class="t" style="left:284.00px;top:61.90px;font-weight:bold;transform:scaleX(1.0368);">36°C</span><div class="btn" style="left:356px;top:56px;width:27px;height:26px;"></div><svg style="left:362px;top:61px" width="16" height="16" viewBox="0 0 16 16" shape-rendering="geometricPrecision"><path d="M.5 .5 H6 L8.5 3 V12 H.5Z" fill="#f4f4f4" stroke="#000"/><path d="M1 12.8 H9.3 V4" fill="none" stroke="#555"/><path d="M2.3 4.5 H6 M2.3 6.5 H6 M2.3 8.5 H6" stroke="#1878ff" stroke-width="1"/><path d="M6.5 3.5 H12 L14.5 6 V15 H6.5Z" fill="#e8e8e8" stroke="#000"/><path d="M7 15.8 H15.3 V7" fill="none" stroke="#555"/><path d="M12 3.5 V6 H14.5" fill="#fff" stroke="#000" stroke-width=".8"/><path d="M8 7.5 H12 M8 9.5 H13 M8 11.5 H13" stroke="#1878ff" stroke-width="1.1"/></svg><div class="btn" style="left:386px;top:56px;width:27px;height:26px;"></div><svg style="left:392px;top:61px" width="16" height="16" viewBox="0 0 16 16" shape-rendering="geometricPrecision"><path d="M.5 .5 H6 L8.5 3 V12 H.5Z" fill="#f4f4f4" stroke="#000"/><path d="M1 12.8 H9.3 V4" fill="none" stroke="#555"/><rect x="2" y="4" width="4.5" height="5.5" fill="#20c020"/><rect x="2" y="4" width="4.5" height="1.6" fill="#30b0f0"/><rect x="3.5" y="6" width="1.8" height="1.8" fill="#f03020"/><rect x="4.4" y="7" width="1.2" height="1.4" fill="#f0e020"/><path d="M6.5 3.5 H12 L14.5 6 V15 H6.5Z" fill="#e8e8e8" stroke="#000"/><path d="M7 15.8 H15.3 V7" fill="none" stroke="#555"/><path d="M12 3.5 V6 H14.5" fill="#fff" stroke="#000" stroke-width=".8"/><rect x="8" y="6.5" width="4.6" height="6" fill="#20c020"/><rect x="8" y="6.5" width="4.6" height="1.6" fill="#30b0f0"/><rect x="9.6" y="8.6" width="1.8" height="1.8" fill="#f03020"/><rect x="10.4" y="9.8" width="1.3" height="1.5" fill="#f0e020"/><rect x="12" y="12" width="1" height="1" fill="#000"/></svg><div class="btn" style="left:416px;top:56px;width:27px;height:26px;"></div><svg style="left:422px;top:61px" width="16" height="16" viewBox="0 0 16 16" shape-rendering="geometricPrecision"><path d="M1 14.8 L.5 14 V.5 H14.5 V14.8Z" fill="#3a3af0" stroke="#000"/><path d="M1.3 15.5 H15.3 V1.5" fill="none" stroke="#555" stroke-width="1"/><rect x="3.5" y=".8" width="8" height="7" fill="#c8c8c8" stroke="#000" stroke-width=".8"/><path d="M4.5 2.6 H10.5 M4.5 4.4 H10.5 M4.5 6.2 H10.5" stroke="#888" stroke-width=".9"/><rect x="3.5" y="10" width="8.5" height="4.6" fill="#b8b8b8" stroke="#000" stroke-width=".8"/><rect x="9.5" y="10.8" width="1.8" height="3" fill="#fff"/><path d="M1.4 1 V14" stroke="#8080ff" stroke-width="1"/></svg><div class="btn" style="left:446px;top:56px;width:27px;height:26px;"></div><svg style="left:451px;top:60.5px" width="16" height="16" viewBox="0 0 16 16" shape-rendering="geometricPrecision"><polygon points="9.70,5.60 9.61,6.52 8.05,6.86 7.74,7.43 8.32,8.92 7.61,9.51 6.26,8.65 5.64,8.84 5.00,10.30 4.08,10.21 3.74,8.65 3.17,8.34 1.68,8.92 1.09,8.21 1.95,6.86 1.76,6.24 0.30,5.60 0.39,4.68 1.95,4.34 2.26,3.77 1.68,2.28 2.39,1.69 3.74,2.55 4.36,2.36 5.00,0.90 5.92,0.99 6.26,2.55 6.83,2.86 8.32,2.28 8.91,2.99 8.05,4.34 8.24,4.96" fill="#e4e400" stroke="#000" stroke-width="1.1" stroke-linejoin="round"/><polygon points="15.50,10.60 15.41,11.52 13.85,11.86 13.54,12.43 14.12,13.92 13.41,14.51 12.06,13.65 11.44,13.84 10.80,15.30 9.88,15.21 9.54,13.65 8.97,13.34 7.48,13.92 6.89,13.21 7.75,11.86 7.56,11.24 6.10,10.60 6.19,9.68 7.75,9.34 8.06,8.77 7.48,7.28 8.19,6.69 9.54,7.55 10.16,7.36 10.80,5.90 11.72,5.99 12.06,7.55 12.63,7.86 14.12,7.28 14.71,7.99 13.85,9.34 14.04,9.96" fill="#e4e400" stroke="#000" stroke-width="1.1" stroke-linejoin="round"/><path d="M4.1 7 V2.2 L5 .4 L5.9 2.2 V7Z" fill="#c0c0c0" stroke="#222" stroke-width=".7"/><path d="M9.9 12 V7.2 L10.8 5.4 L11.7 7.2 V12Z" fill="#c0c0c0" stroke="#222" stroke-width=".7"/></svg><div class="btn" style="left:480px;top:56px;width:27px;height:26px;"></div><div style="left:484px;top:59px;width:19px;height:19px;background:linear-gradient(135deg,#d040d0,#b000b0 45%,#a000a0);border-radius:1px;box-shadow:inset 0 0 0 1px rgba(255,160,255,.35)"></div><svg style="left:484px;top:59px" width="19" height="19" viewBox="0 0 19 19" ><path d="M7.9 2.3 H11.1 V10.7 H15.8 L9.5 17 L3.2 10.7 H7.9Z" fill="#fff"/></svg><div class="btn" style="left:522px;top:56px;width:52px;height:26px;"></div><span class="t" style="left:538.90px;top:61.50px;transform:scaleX(0.8593);">Exit</span><div class="page" style="left:19px;top:138px;width:555px;height:373px;"></div><div class="tab" style="left:21px;top:98px;width:106px;height:20px;"></div><svg style="left:39px;top:100px" width="16" height="16" viewBox="0 0 16 16" shape-rendering="geometricPrecision"><ellipse cx="3.5" cy="5" rx="3" ry="4.7" fill="#d8d800" stroke="#222" stroke-width="1"/><path d="M1.6 7.5 L5.4 7.5 L4.6 11 L2.4 11Z" fill="#d8d800" stroke="#222" stroke-width=".9"/><ellipse cx="2.8" cy="3.5" rx="1" ry="1.8" fill="#ffff90"/><rect x="1.3" y="12.3" width="4.4" height="2.7" rx="1.2" fill="#c8c800" stroke="#222" stroke-width=".9"/></svg><span class="t" style="left:57.80px;top:100.50px;transform:scaleX(0.8896);">Benchmark</span><div class="tab" style="left:127px;top:98px;width:70px;height:20px;"></div><svg style="left:144px;top:100px" width="16" height="16" viewBox="0 0 16 16" shape-rendering="geometricPrecision"><defs><linearGradient id="ig" x1="0" y1="0" x2="0" y2="1"><stop offset="0" stop-color="#00c8f8"/><stop offset="1" stop-color="#0030f0"/></linearGradient></defs><rect x="2.5" y=".8" width="5" height="3.6" rx="1.4" fill="#18c0f8" stroke="#111" stroke-width=".9"/><path d="M1.5 5.8 H7.4 V13.6 H9.3 V15.4 H.6 V13.6 H2.6 V7.6 H1.5Z" fill="url(#ig)" stroke="#111" stroke-width=".9"/></svg><span class="t" style="left:163.90px;top:100.50px;transform:scaleX(0.8743);">Info</span><div class="tab" style="left:197px;top:98px;width:83px;height:20px;"></div><svg style="left:211px;top:100px" width="16" height="16" viewBox="0 0 16 16" shape-rendering="geometricPrecision"><path d="M5.5 .8 H10.5 V5.5 H15.2 V10.5 H10.5 V15.2 H5.5 V10.5 H.8 V5.5 H5.5Z" fill="#e21c1c" stroke="#6a0000" stroke-width="1.1"/><path d="M6.3 1.8 H8 V6.3 H1.8 V8" fill="none" stroke="#ff7070" stroke-width="1"/></svg><span class="t" style="left:233.80px;top:100.50px;transform:scaleX(0.8850);">Health</span><div class="tab" style="left:280px;top:98px;width:102px;height:20px;"></div><svg style="left:294px;top:100px" width="16" height="16" viewBox="0 0 16 16" shape-rendering="geometricPrecision"><path d="M9.3 9.3 L14.3 14.6" stroke="#000" stroke-width="4.2" stroke-linecap="round"/><path d="M9.3 9.3 L14.3 14.6" stroke="#1010d0" stroke-width="2.4" stroke-linecap="round"/><circle cx="5.6" cy="5.4" r="4.8" fill="#18c828" stroke="#000" stroke-width="1.1"/><path d="M3.5 7.6 L7.6 3.3" stroke="#b0ffb0" stroke-width="1.3"/><circle cx="4.2" cy="3.8" r="1.1" fill="#70f070"/></svg><span class="t" style="left:316.80px;top:100.50px;transform:scaleX(0.8752);">Error Scan</span><div class="tab" style="left:382px;top:98px;width:114px;height:20px;"></div><svg style="left:396px;top:100px" width="16" height="16" viewBox="0 0 16 16" shape-rendering="geometricPrecision"><defs><linearGradient id="fg" x1="0" y1="0" x2="1" y2="1"><stop offset="0" stop-color="#f6e040"/><stop offset="1" stop-color="#cf9800"/></linearGradient></defs><path d="M.7 14.5 V2.2 Q.7 .8 2.2 .8 H5.2 L7 3 H13.2 Q14.4 3 14.4 4.2 V14.5Z" fill="#f2e060" stroke="#000" stroke-width="1.1"/><path d="M2.6 15.3 V5 H14.4 V15.3Z" fill="url(#fg)" stroke="#000" stroke-width="1.1"/><path d="M3.6 14.5 V6 H13.4" fill="none" stroke="#fff6a0" stroke-width=".9"/></svg><span class="t" style="left:418.90px;top:100.50px;transform:scaleX(0.8717);">Folder Usage</span><div class="tab" style="left:496px;top:98px;width:76px;height:20px;"></div><svg style="left:510.3px;top:100px" width="16" height="16" viewBox="0 0 16 16" shape-rendering="geometricPrecision"><defs><linearGradient id="eg" x1="0" y1="0" x2="1" y2="0"><stop offset="0" stop-color="#666"/><stop offset=".18" stop-color="#d8d8d8"/><stop offset=".38" stop-color="#fff"/><stop offset=".58" stop-color="#a8a8a8"/><stop offset=".8" stop-color="#1a1a1a"/><stop offset="1" stop-color="#666"/></linearGradient></defs><path d="M4.6 1.8 V.6 H9.4 V1.8" fill="#888" stroke="#000" stroke-width="1"/><rect x=".5" y="1.7" width="13" height="2" fill="url(#eg)" stroke="#000" stroke-width="1"/><path d="M1.5 3.9 H12.5 L12.1 15.4 H1.9Z" fill="url(#eg)" stroke="#000" stroke-width="1"/><path d="M3.6 5 V14.6 M7.4 5 V14.6" stroke="#444" stroke-width=".6"/></svg><span class="t" style="left:532.80px;top:100.50px;transform:scaleX(0.8578);">Erase</span><div class="tab sel" style="left:19px;top:116px;width:132px;height:23px;"></div><div style="z-index:4;left:0;top:0;width:0;height:0"><svg style="left:36px;top:118px" width="16" height="16" viewBox="0 0 16 16" shape-rendering="geometricPrecision"><path d="M.5 .5 H10.5 L13.5 3.5 V15 H.5Z" fill="#e6e6e6" stroke="#000"/><path d="M1 15.7 H14.2 V4" fill="none" stroke="#777" stroke-width="1"/><path d="M10.5 .5 V3.5 H13.5" fill="#fff" stroke="#000" stroke-width=".8"/><ellipse cx="7" cy="6.2" rx="2.3" ry="3.8" fill="#e020e0" stroke="#400040" stroke-width=".8"/><path d="M5.8 9 L8.2 9 L7.6 11 L6.4 11Z" fill="#e020e0" stroke="#400040" stroke-width=".6"/><rect x="5.4" y="12" width="3.2" height="2" rx=".9" fill="#e020e0" stroke="#400040" stroke-width=".7"/></svg><span class="t" style="left:58.70px;top:118.50px;transform:scaleX(0.8780);">File Benchmark</span></div><div class="tab" style="left:149px;top:118px;width:113px;height:20px;"></div><svg style="left:164px;top:120px" width="16" height="16" viewBox="0 0 16 16" shape-rendering="geometricPrecision"><rect x="1" y="1" width="15" height="15" fill="#555"/><rect x=".5" y=".5" width="14.5" height="14.5" fill="#ffffc8" stroke="#000"/><path d="M1 15 V7 H3 V15Z M5 15 V7.5 H6.2 V15Z M8 15 V7 H10.6 V15Z M13 15 V10 H14.5 V15Z M3 15 V11 H5 V15Z M10.6 15 V9 H11.4 V15Z" fill="#18e018"/><path d="M3.6 15 V10 H5 V15Z M6.2 15 V6 H8 V15Z M11.4 15 V9 H13 V15Z" fill="#3838f0"/></svg><span class="t" style="left:186.40px;top:120.50px;transform:scaleX(0.8847);">Disk monitor</span><div class="tab" style="left:262px;top:118px;width:77px;height:20px;"></div><svg style="left:277px;top:120px" width="16" height="16" viewBox="0 0 16 16" shape-rendering="geometricPrecision"><path d="M.7 6 H3.6 L9.3 .8 V15.2 L3.6 10 H.7Z" fill="#e8e000" stroke="#000" stroke-width="1.1" stroke-linejoin="round"/><path d="M3.8 6.2 L8.4 2.4 V8" fill="#ffff90"/><path d="M7.4 3 V13" stroke="#806000" stroke-width=".8"/><path d="M11 5 Q12.6 8 11 11" fill="none" stroke="#111" stroke-width="1.1"/><path d="M13 3.2 Q15.8 8 13 12.8" fill="none" stroke="#333" stroke-width="1.1"/></svg><span class="t" style="left:299.80px;top:120.50px;transform:scaleX(0.8918);">AAM</span><div class="tab" style="left:339px;top:118px;width:132px;height:20px;"></div><svg style="left:354px;top:120px" width="16" height="16" viewBox="0 0 16 16" shape-rendering="geometricPrecision"><rect x="1" y="1" width="15" height="15" fill="#555"/><rect x=".5" y=".5" width="14.5" height="14.5" fill="#ffffc8" stroke="#000"/><g fill="#f01818"><rect x="2" y="13" width="1.3" height="1.3"/><rect x="3.5" y="10.6" width="1.3" height="1.3"/><rect x="6.6" y="10.8" width="1.3" height="1.3"/><rect x="7.4" y="8" width="1.3" height="1.3"/><rect x="9.2" y="10.2" width="1.3" height="1.3"/><rect x="11" y="8" width="1.3" height="1.3"/><rect x="12.3" y="10.6" width="1.3" height="1.3"/></g><g fill="#2030f0"><rect x="3" y="8.4" width="1.3" height="1.3"/><rect x="4" y="6" width="1.3" height="1.3"/><rect x="5.4" y="8.8" width="1.3" height="1.3"/><rect x="7.4" y="5.6" width="1.3" height="1.3"/><rect x="9.6" y="4" width="1.3" height="1.3"/><rect x="11.4" y="3" width="1.3" height="1.3"/><rect x="11.6" y="5.4" width="1.3" height="1.3"/></g></svg><span class="t" style="left:377.00px;top:120.50px;transform:scaleX(0.8983);">Random Access</span><div class="tab" style="left:471px;top:118px;width:101px;height:20px;"></div><svg style="left:486px;top:120px" width="16" height="16" viewBox="0 0 16 16" shape-rendering="geometricPrecision"><rect x="1" y="1" width="15" height="15" fill="#555"/><rect x=".5" y=".5" width="14.5" height="14.5" fill="#ffffc8" stroke="#000"/><rect x="1" y="7" width="2.8" height="8" fill="#18e018"/><rect x="3.8" y="10" width="2" height="5" fill="#3838f0"/><rect x="6.5" y="6.5" width="8.5" height="8.5" fill="#fff" stroke="#000" stroke-width="1"/><rect x="7" y="7" width="7.5" height="1.7" fill="#2030e0"/><rect x="7.9" y="9.7" width="1.1" height="1.1" fill="#f01818"/><rect x="10.1" y="9.7" width="1.1" height="1.1" fill="#2030f0"/><rect x="12.3" y="9.7" width="1.1" height="1.1" fill="#f01818"/><rect x="7.9" y="11.6" width="1.1" height="1.1" fill="#10a010"/><rect x="10.1" y="11.6" width="1.1" height="1.1" fill="#f01818"/><rect x="12.3" y="11.6" width="1.1" height="1.1" fill="#10a010"/><rect x="7.9" y="13.4" width="1.1" height="1.1" fill="#f01818"/><rect x="10.1" y="13.4" width="1.1" height="1.1" fill="#10a010"/><rect x="12.3" y="13.4" width="1.1" height="1.1" fill="#2030f0"/></svg><span class="t" style="left:508.90px;top:120.50px;transform:scaleX(0.8679);">Extra tests</span><div class="cb" style="left:53px;top:152px;width:13px;height:13px;"><svg style="left:0;top:0" width="11" height="11" viewBox="0 0 11 11"><path d="M2.3 4.4 L3.6 4.4 L4.7 6.6 L8 1.4 L9 1.4 L4.9 9 L4.2 9Z" fill="#3f5493" stroke="#3f5493" stroke-width=".5" stroke-linejoin="round"/></svg></div><span class="t" style="left:69.00px;top:150.80px;transform:scaleX(0.8821);">Transfer speed</span><div style="left:51px;top:181px;width:390px;height:105px;background:#000"></div><div style="left:53px;top:183px;width:387px;height:101px;background:linear-gradient(#000 0,#070707 6%,#3e3e3e 100%)"></div><svg style="left:0;top:0" width="594" height="520" font-family='"Liberation Sans", Arial, sans-serif' font-size="10.6"><rect x="53" y="183" width="1" height="106" fill="#787878" fill-opacity=".9"/><rect x="72" y="183" width="1" height="104" fill="#4b4b4b" fill-opacity=".85"/><rect x="91" y="183" width="1" height="106" fill="#787878" fill-opacity=".9"/><rect x="110" y="183" width="1" height="104" fill="#4b4b4b" fill-opacity=".85"/><rect x="130" y="183" width="1" height="106" fill="#787878" fill-opacity=".9"/><rect x="149" y="183" width="1" height="104" fill="#4b4b4b" fill-opacity=".85"/><rect x="168" y="183" width="1" height="106" fill="#787878" fill-opacity=".9"/><rect x="188" y="183" width="1" height="104" fill="#4b4b4b" fill-opacity=".85"/><rect x="207" y="183" width="1" height="106" fill="#787878" fill-opacity=".9"/><rect x="226" y="183" width="1" height="104" fill="#4b4b4b" fill-opacity=".85"/><rect x="246" y="183" width="1" height="106" fill="#787878" fill-opacity=".9"/><rect x="265" y="183" width="1" height="104" fill="#4b4b4b" fill-opacity=".85"/><rect x="284" y="183" width="1" height="106" fill="#787878" fill-opacity=".9"/><rect x="303" y="183" width="1" height="104" fill="#4b4b4b" fill-opacity=".85"/><rect x="323" y="183" width="1" height="106" fill="#787878" fill-opacity=".9"/><rect x="342" y="183" width="1" height="104" fill="#4b4b4b" fill-opacity=".85"/><rect x="361" y="183" width="1" height="106" fill="#787878" fill-opacity=".9"/><rect x="381" y="183" width="1" height="104" fill="#4b4b4b" fill-opacity=".85"/><rect x="400" y="183" width="1" height="106" fill="#787878" fill-opacity=".9"/><rect x="419" y="183" width="1" height="104" fill="#4b4b4b" fill-opacity=".85"/><rect x="439" y="183" width="1" height="106" fill="#787878" fill-opacity=".9"/><rect x="50" y="183" width="393" height="1" fill="#787878" fill-opacity=".9"/><rect x="53" y="191" width="387" height="1" fill="#4b4b4b" fill-opacity=".85"/><rect x="50" y="199" width="393" height="1" fill="#787878" fill-opacity=".9"/><rect x="53" y="208" width="387" height="1" fill="#4b4b4b" fill-opacity=".85"/><rect x="50" y="216" width="393" height="1" fill="#787878" fill-opacity=".9"/><rect x="53" y="225" width="387" height="1" fill="#4b4b4b" fill-opacity=".85"/><rect x="50" y="233" width="393" height="1" fill="#787878" fill-opacity=".9"/><rect x="53" y="241" width="387" height="1" fill="#4b4b4b" fill-opacity=".85"/><rect x="50" y="250" width="393" height="1" fill="#787878" fill-opacity=".9"/><rect x="53" y="258" width="387" height="1" fill="#4b4b4b" fill-opacity=".85"/><rect x="50" y="267" width="393" height="1" fill="#787878" fill-opacity=".9"/><rect x="53" y="275" width="387" height="1" fill="#4b4b4b" fill-opacity=".85"/><polyline points="53.3,262.5 53.7,232.9 54.3,205.0 55.0,213.9 55.6,211.7 56.3,228.7 57.1,237.1 57.9,243.5 59.0,234.0 60.1,235.4 60.7,231.9 61.8,229.7 63.8,232.7 65.8,229.7 67.8,232.7 69.8,229.7 71.7,232.7 73.7,229.7 75.7,232.7 77.7,229.7 79.7,232.7 81.7,229.7 83.7,232.7 85.7,235.4 86.7,229.7 88.2,226.6 89.9,224.0 92.4,223.0 95.0,224.4 96.3,227.0 97.9,224.4 100.9,223.8 111.5,223.8 112.6,221.9 114.0,225.5 115.7,227.0 117.0,224.0 130.5,223.8 132.2,226.6 133.9,223.8 141.1,223.8 144.3,223.8 145.8,224.9 147.5,223.8 153.8,223.8 164.0,223.8 165.7,227.4 166.9,229.1 168.0,222.3 169.1,220.2 202.5,220.2 204.2,220.6 205.0,243.5 206.3,266.8 207.2,232.9 208.2,205.8 209.3,211.7 210.5,220.2 212.2,221.3 213.5,239.9 214.8,225.5 215.6,220.6 221.5,220.2 223.2,223.4 224.9,220.6 232.1,219.8 234.2,220.8 248.0,220.2 248.5,220.2 250.6,219.8 252.3,220.2 253.3,227.0 254.8,231.4 255.2,232.7 257.2,229.7 259.2,232.7 261.2,229.7 263.2,232.7 265.2,229.7 267.2,232.7 269.2,229.7 271.2,232.7 273.1,229.7 275.1,232.7 277.1,229.7 279.1,232.7 281.1,229.7 283.1,232.7 285.1,229.7 287.1,232.7 289.1,229.7 291.0,232.7 293.0,229.7 295.0,232.7 297.0,229.7 299.0,232.7 301.0,229.7 303.0,232.7 305.0,229.7 307.0,232.7 309.0,229.7 310.9,232.7 312.9,229.7 314.9,232.7 316.9,229.7 318.9,232.7 320.9,229.7 322.9,232.7 324.9,229.7 326.9,232.7 329.9,230.8 331.4,227.0 333.5,223.6 339.5,223.4 341.2,226.1 342.9,223.8 345.8,222.3 347.5,223.8 349.0,227.4 350.5,223.8 355.3,223.8 356.8,226.1 358.5,223.8 373.3,223.8 375.0,227.0 376.7,223.8 390.7,223.8 392.8,227.0 394.5,223.8 407.2,223.8 409.3,227.0 410.6,227.0 411.9,221.3 413.1,220.2 419.9,219.8 422.0,220.2 436.8,220.2 438.9,220.6" fill="none" stroke="#ff8c1a" stroke-width="1" stroke-linejoin="miter" shape-rendering="crispEdges"/><polyline points="53.3,262.5 53.7,243.5 54.1,230.8 55.0,229.1 55.8,232.3 57.8,229.3 59.8,232.3 61.8,229.3 63.8,232.3 65.8,229.3 67.8,232.3 69.8,229.3 71.7,232.3 73.7,229.3 75.7,232.3 77.7,229.3 79.7,232.3 81.7,229.3 83.7,232.3 86.5,229.7 87.8,227.0 89.3,224.0 91.4,223.4 95.6,223.8 97.7,226.6 99.4,223.8 103.4,223.8 105.1,226.6 106.8,223.8 111.5,223.8 113.6,226.6 115.3,223.6 120.4,223.8 122.1,226.8 123.8,223.8 129.5,223.8 131.6,226.6 133.3,223.8 138.4,223.8 140.1,227.0 141.5,223.8 143.7,223.8 144.9,245.6 146.4,256.2 147.9,253.0 149.6,224.0 155.5,223.8 158.1,226.8 160.2,223.8 163.3,223.8 165.5,228.3 167.2,221.9 168.6,220.2 178.8,220.2 180.9,224.4 183.0,220.2 193.0,220.2 195.1,224.4 197.2,220.2 207.8,220.2 209.9,223.8 211.6,220.2 221.5,220.2 223.7,224.4 225.8,220.2 237.4,220.2 239.5,224.4 241.7,220.2 248.0,220.2 248.5,220.2 251.0,220.2 252.7,225.5 254.4,230.8 255.2,232.3 257.2,229.3 259.2,232.3 261.2,229.3 263.2,232.3 265.2,229.3 267.2,232.3 269.2,229.3 271.2,232.3 273.1,229.3 275.1,232.3 277.1,229.3 279.1,232.3 281.1,229.3 283.1,232.3 285.1,229.3 287.1,232.3 289.1,229.3 291.0,232.3 293.0,229.3 295.0,232.3 297.0,229.3 299.0,232.3 301.0,229.3 303.0,232.3 305.0,229.3 307.0,232.3 309.0,229.3 310.9,232.3 312.9,229.3 314.9,232.3 316.9,229.3 318.9,232.3 320.9,229.3 322.9,232.3 324.9,229.3 326.9,232.3 330.6,227.6 333.1,223.4 338.4,223.6 340.5,226.6 342.2,223.8 346.9,223.8 349.0,227.0 350.7,223.8 355.3,223.8 357.5,226.6 359.2,223.8 364.9,223.8 367.0,226.6 368.7,223.8 373.3,223.8 375.4,226.6 377.1,223.8 381.8,223.8 383.9,226.6 385.6,223.8 390.7,223.8 392.4,226.6 394.1,223.8 399.8,223.8 401.9,226.6 403.6,223.8 407.2,223.8 409.3,228.3 411.0,222.3 412.5,220.2 423.1,220.2 425.2,224.4 427.3,220.2 436.8,220.2 438.9,223.4" fill="none" stroke="#18b4f4" stroke-width="1" stroke-linejoin="miter" shape-rendering="crispEdges"/><text x="53.2" y="179.6" text-anchor="start" fill="#000" font-size="10.6">MB/s</text><text x="425.4" y="179.8" text-anchor="start" fill="#000" font-size="10.6">ms</text><text x="47.6" y="187.4" text-anchor="end" fill="#000" font-size="10.6">150</text><text x="47.6" y="204.2" text-anchor="end" fill="#000" font-size="10.6">125</text><text x="47.6" y="221.0" text-anchor="end" fill="#000" font-size="10.6">100</text><text x="47.6" y="237.8" text-anchor="end" fill="#000" font-size="10.6">75</text><text x="47.6" y="254.6" text-anchor="end" fill="#000" font-size="10.6">50</text><text x="47.6" y="271.4" text-anchor="end" fill="#000" font-size="10.6">25</text><text x="444.0" y="186.5" text-anchor="start" fill="#000" font-size="10.6">60</text><text x="444.0" y="203.3" text-anchor="start" fill="#000" font-size="10.6">50</text><text x="444.0" y="220.1" text-anchor="start" fill="#000" font-size="10.6">40</text><text x="444.0" y="236.9" text-anchor="start" fill="#000" font-size="10.6">30</text><text x="444.0" y="253.7" text-anchor="start" fill="#000" font-size="10.6">20</text><text x="444.0" y="270.5" text-anchor="start" fill="#000" font-size="10.6">10</text><text x="53.5" y="298.7" text-anchor="middle" fill="#000" font-size="10.6">0</text><text x="92.1" y="298.7" text-anchor="middle" fill="#000" font-size="10.6">50</text><text x="130.7" y="298.7" text-anchor="middle" fill="#000" font-size="10.6">100</text><text x="169.3" y="298.7" text-anchor="middle" fill="#000" font-size="10.6">150</text><text x="207.9" y="298.7" text-anchor="middle" fill="#000" font-size="10.6">200</text><text x="246.5" y="298.7" text-anchor="middle" fill="#000" font-size="10.6">250</text><text x="285.1" y="298.7" text-anchor="middle" fill="#000" font-size="10.6">300</text><text x="323.7" y="298.7" text-anchor="middle" fill="#000" font-size="10.6">350</text><text x="362.3" y="298.7" text-anchor="middle" fill="#000" font-size="10.6">400</text><text x="400.9" y="298.7" text-anchor="middle" fill="#000" font-size="10.6">450</text><text x="422.2" y="298.7" text-anchor="start" fill="#000" font-size="10.6">500mB</text><text x="56.2" y="193.8" text-anchor="start" fill="#b4b4b4" font-size="11">trial version</text></svg><div style="left:49px;top:317px;width:363px;height:2px;background:#545454"></div><div style="left:232px;top:303px;width:2px;height:75px;background:#545454"></div><div style="left:316px;top:303px;width:2px;height:75px;background:#545454"></div><span class="t" style="left:261.00px;top:301.80px;transform:scaleX(0.8924);">Read</span><span class="t" style="left:347.80px;top:301.80px;transform:scaleX(0.8927);">Write</span><span class="t" style="left:52.60px;top:320.70px;transform:scaleX(0.8851);">Sequential</span><span class="t" style="left:51.80px;top:340.80px;transform:scaleX(0.8708);">4 KB random single</span><span class="t" style="left:51.80px;top:359.50px;transform:scaleX(0.8590);">4 KB random multi</span><span class="t" style="left:246.11px;top:320.80px;font-size:12.5px;line-height:16px;font-weight:bold;transform:scaleX(1.0117);">86095 KB/s</span><span class="t" style="left:259.70px;top:340.50px;font-size:12.5px;line-height:16px;font-weight:bold;transform:scaleX(1.0072);">119 IOPS</span><span class="t" style="left:259.70px;top:359.40px;font-size:12.5px;line-height:16px;font-weight:bold;transform:scaleX(0.9944);">224 IOPS</span><span class="t" style="left:333.11px;top:320.80px;font-size:12.5px;line-height:16px;font-weight:bold;transform:scaleX(1.0117);">85548 KB/s</span><span class="t" style="left:353.00px;top:340.50px;font-size:12.5px;line-height:16px;font-weight:bold;transform:scaleX(1.0074);">68 IOPS</span><span class="t" style="left:353.00px;top:359.40px;font-size:12.5px;line-height:16px;font-weight:bold;transform:scaleX(1.0074);">64 IOPS</span><div class="edit" style="left:163px;top:356px;width:35px;height:20px;"></div><span class="t" style="left:165.60px;top:359.50px;transform:scaleX(0.9581);">32</span><div class="spbtn" style="left:181px;top:358px;width:15px;height:8.5px;"></div><div class="spbtn" style="left:181px;top:366.5px;width:15px;height:8.5px;"></div><svg style="left:181px;top:358px" width="15" height="18.0" viewBox="0 0 15 18.0" ><path d="M4.7 5.65 L7.5 2.65 L10.3 5.65Z M4.7 11.35 L7.5 14.35 L10.3 11.35Z" fill="#44599a"/></svg><div class="sep" style="left:23px;top:384px;width:533px;height:1px;"></div><div class="cb" style="left:53px;top:391px;width:13px;height:13px;"></div><span class="t" style="left:69.00px;top:389.80px;transform:scaleX(0.8706);">Block size measurement</span><div style="left:39px;top:422px;width:424px;height:70px;background:#000"></div><div style="left:41px;top:424px;width:420px;height:66px;background:linear-gradient(#000 0,#070707 6%,#3e3e3e 100%)"></div><svg style="left:0;top:0" width="594" height="520" font-family='"Liberation Sans", Arial, sans-serif' font-size="10.6"><rect x="54" y="424" width="1" height="72" fill="#787878" fill-opacity=".9"/><rect x="81" y="424" width="1" height="72" fill="#787878" fill-opacity=".9"/><rect x="109" y="424" width="1" height="72" fill="#787878" fill-opacity=".9"/><rect x="137" y="424" width="1" height="72" fill="#787878" fill-opacity=".9"/><rect x="165" y="424" width="1" height="72" fill="#787878" fill-opacity=".9"/><rect x="193" y="424" width="1" height="72" fill="#787878" fill-opacity=".9"/><rect x="221" y="424" width="1" height="72" fill="#787878" fill-opacity=".9"/><rect x="249" y="424" width="1" height="72" fill="#787878" fill-opacity=".9"/><rect x="277" y="424" width="1" height="72" fill="#787878" fill-opacity=".9"/><rect x="305" y="424" width="1" height="72" fill="#787878" fill-opacity=".9"/><rect x="333" y="424" width="1" height="72" fill="#787878" fill-opacity=".9"/><rect x="361" y="424" width="1" height="72" fill="#787878" fill-opacity=".9"/><rect x="389" y="424" width="1" height="72" fill="#787878" fill-opacity=".9"/><rect x="417" y="424" width="1" height="72" fill="#787878" fill-opacity=".9"/><rect x="445" y="424" width="1" height="72" fill="#787878" fill-opacity=".9"/><rect x="38" y="424" width="428" height="1" fill="#787878" fill-opacity=".9"/><rect x="41" y="430" width="420" height="1" fill="#4b4b4b" fill-opacity=".85"/><rect x="38" y="437" width="428" height="1" fill="#787878" fill-opacity=".9"/><rect x="41" y="443" width="420" height="1" fill="#4b4b4b" fill-opacity=".85"/><rect x="38" y="450" width="428" height="1" fill="#787878" fill-opacity=".9"/><rect x="41" y="456" width="420" height="1" fill="#4b4b4b" fill-opacity=".85"/><rect x="38" y="463" width="428" height="1" fill="#787878" fill-opacity=".9"/><rect x="41" y="469" width="420" height="1" fill="#4b4b4b" fill-opacity=".85"/><rect x="38" y="476" width="428" height="1" fill="#787878" fill-opacity=".9"/><rect x="41" y="482" width="420" height="1" fill="#4b4b4b" fill-opacity=".85"/><text x="41.4" y="418.6" text-anchor="start" fill="#000" font-size="10.6">MB/s</text><text x="36.6" y="427.7" text-anchor="end" fill="#000" font-size="10.6">25</text><text x="36.6" y="440.7" text-anchor="end" fill="#000" font-size="10.6">20</text><text x="36.6" y="453.8" text-anchor="end" fill="#000" font-size="10.6">15</text><text x="36.6" y="466.8" text-anchor="end" fill="#000" font-size="10.6">10</text><text x="36.6" y="479.9" text-anchor="end" fill="#000" font-size="10.6">5</text><text x="53.9" y="505.7" text-anchor="middle" fill="#000" font-size="10.6">0.5</text><text x="81.8" y="505.7" text-anchor="middle" fill="#000" font-size="10.6">1</text><text x="109.8" y="505.7" text-anchor="middle" fill="#000" font-size="10.6">2</text><text x="137.7" y="505.7" text-anchor="middle" fill="#000" font-size="10.6">4</text><text x="165.6" y="505.7" text-anchor="middle" fill="#000" font-size="10.6">8</text><text x="193.6" y="505.7" text-anchor="middle" fill="#000" font-size="10.6">16</text><text x="221.5" y="505.7" text-anchor="middle" fill="#000" font-size="10.6">32</text><text x="249.4" y="505.7" text-anchor="middle" fill="#000" font-size="10.6">64</text><text x="277.3" y="505.7" text-anchor="middle" fill="#000" font-size="10.6">128</text><text x="305.3" y="505.7" text-anchor="middle" fill="#000" font-size="10.6">256</text><text x="333.2" y="505.7" text-anchor="middle" fill="#000" font-size="10.6">512</text><text x="361.1" y="505.7" text-anchor="middle" fill="#000" font-size="10.6">1024</text><text x="389.1" y="505.7" text-anchor="middle" fill="#000" font-size="10.6">2048</text><text x="417.0" y="505.7" text-anchor="middle" fill="#000" font-size="10.6">4096</text><text x="444.9" y="505.7" text-anchor="middle" fill="#000" font-size="10.6">8192</text><rect x="397.4" y="411" width="8.6" height="8.6" fill="#1a9cd8"/><rect x="433.2" y="411" width="8.6" height="8.6" fill="#d9700e"/><text x="406.4" y="419.3" text-anchor="start" fill="#000" font-size="10.6">read</text><text x="442.4" y="419.3" text-anchor="start" fill="#000" font-size="10.6">write</text></svg><div class="btn def" style="left:489px;top:152px;width:73px;height:21px;"></div><span class="t" style="left:513.80px;top:155.00px;transform:scaleX(0.8602);">Start</span><span class="t" style="left:488.20px;top:179.60px;transform:scaleX(0.8709);">Drive</span><div class="btn" style="left:488px;top:199px;width:75px;height:21px;"></div><span class="t" style="left:492.00px;top:201.30px;transform:scaleX(0.9333);">D:</span><div class="arrow" style="left:551px;top:208px;width:7px;height:4px;"></div><span class="t" style="left:488.40px;top:224.90px;transform:scaleX(0.8524);">File length</span><div class="edit" style="left:488px;top:251px;width:56px;height:20px;"></div><span class="t" style="left:491.00px;top:252.70px;transform:scaleX(0.9086);">500</span><div class="spbtn" style="left:527px;top:253px;width:15px;height:8.5px;"></div><div class="spbtn" style="left:527px;top:261.5px;width:15px;height:8.5px;"></div><svg style="left:527px;top:253px" width="15" height="18.0" viewBox="0 0 15 18.0" ><path d="M4.7 5.65 L7.5 2.65 L10.3 5.65Z M4.7 11.35 L7.5 14.35 L10.3 11.35Z" fill="#44599a"/></svg><span class="t" style="left:545.20px;top:255.70px;transform:scaleX(0.8667);">MB</span><span class="t" style="left:488.40px;top:286.80px;transform:scaleX(0.8842);">Data pattern</span><div class="btn" style="left:488px;top:307px;width:75px;height:21px;"></div><span class="t" style="left:491.80px;top:309.60px;transform:scaleX(0.8830);">Zero</span><div class="arrow" style="left:551px;top:316px;width:7px;height:4px;"></div><span class="t" style="left:489.80px;top:396.90px;transform:scaleX(0.8524);">File length</span><div class="btn" style="left:488px;top:420px;width:75px;height:21px;"></div><span class="t" style="left:491.80px;top:422.50px;transform:scaleX(0.8995);">64 MB</span><div class="arrow" style="left:551px;top:429px;width:7px;height:4px;"></div><span class="t" style="left:489.80px;top:450.40px;transform:scaleX(0.8733);">Delay</span><div class="edit" style="left:490px;top:472px;width:54px;height:20px;"></div><span class="t" style="left:493.00px;top:473.60px;transform:scaleX(0.9869);">0</span><div class="spbtn" style="left:548px;top:471.5px;width:15px;height:10px;"></div><div class="spbtn" style="left:548px;top:482.0px;width:15px;height:10px;"></div><svg style="left:548px;top:471.5px" width="15" height="21.5" viewBox="0 0 15 21.5" ><path d="M4.7 6.4 L7.5 3.4 L10.3 6.4Z M4.7 14.1 L7.5 17.1 L10.3 14.1Z" fill="#44599a"/></svg></div></div>
</body></html>
